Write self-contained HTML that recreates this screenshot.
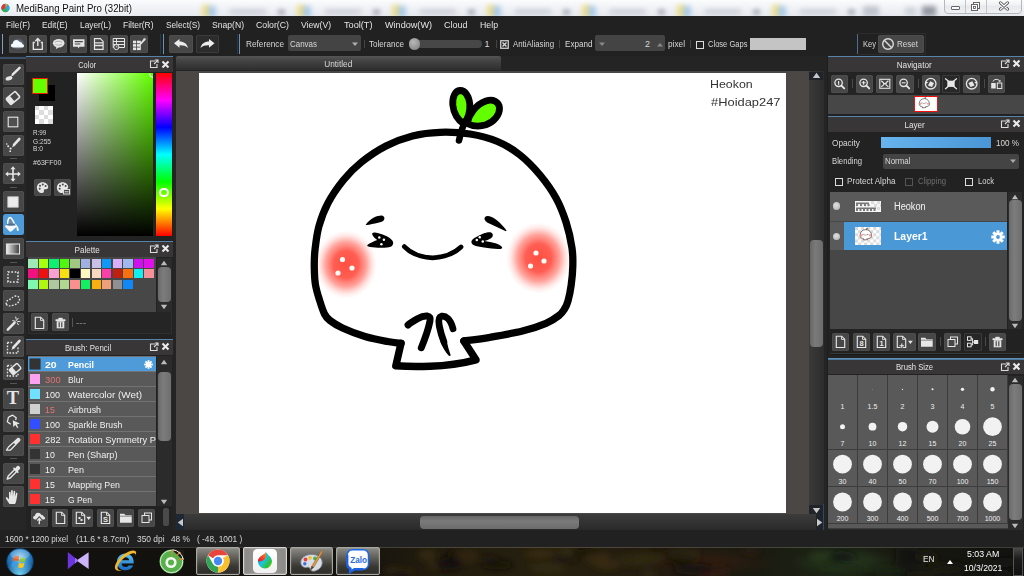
<!DOCTYPE html>
<html><head><meta charset="utf-8"><title>MediBang Paint Pro</title>
<style>
html,body{margin:0;padding:0;background:#1e1e1e;}
#root{position:relative;width:1024px;height:576px;overflow:hidden;background:#1e1e1e;font-family:"Liberation Sans",sans-serif;}
.a{position:absolute;box-sizing:border-box;}
.t{white-space:nowrap;}
.btn{background:#474747;border-radius:2.5px;box-shadow:inset 0 0 0 0.6px #545454;}
</style></head><body><div id="root">
<div class="a " style="left:0px;top:0px;width:1024px;height:16px;background:linear-gradient(#fbfcfd,#eef0f4 60%,#e6e9ee);"></div>
<div class="a " style="left:202px;top:5px;width:8px;height:12px;background:#ecd458;filter:blur(2.4px);opacity:.65;"></div>
<div class="a " style="left:208px;top:6px;width:8px;height:11px;background:#7fb4e8;filter:blur(2.4px);opacity:.6;"></div>
<div class="a " style="left:230px;top:9px;width:36px;height:5px;background:#8a92a2;filter:blur(2.4px);opacity:.32;"></div>
<div class="a " style="left:278px;top:8.5px;width:7px;height:6.0px;background:#5a6272;filter:blur(2px);opacity:.4;"></div>
<div class="a " style="left:297px;top:5px;width:8px;height:12px;background:#ecd458;filter:blur(2.4px);opacity:.65;"></div>
<div class="a " style="left:303px;top:6px;width:8px;height:11px;background:#7fb4e8;filter:blur(2.4px);opacity:.6;"></div>
<div class="a " style="left:325px;top:9px;width:36px;height:5px;background:#8a92a2;filter:blur(2.4px);opacity:.32;"></div>
<div class="a " style="left:373px;top:8.5px;width:7px;height:6.0px;background:#5a6272;filter:blur(2px);opacity:.4;"></div>
<div class="a " style="left:392px;top:5px;width:8px;height:12px;background:#ecd458;filter:blur(2.4px);opacity:.65;"></div>
<div class="a " style="left:398px;top:6px;width:8px;height:11px;background:#7fb4e8;filter:blur(2.4px);opacity:.6;"></div>
<div class="a " style="left:420px;top:9px;width:36px;height:5px;background:#8a92a2;filter:blur(2.4px);opacity:.32;"></div>
<div class="a " style="left:468px;top:8.5px;width:7px;height:6.0px;background:#5a6272;filter:blur(2px);opacity:.4;"></div>
<div class="a " style="left:487px;top:5px;width:8px;height:12px;background:#ecd458;filter:blur(2.4px);opacity:.65;"></div>
<div class="a " style="left:493px;top:6px;width:8px;height:11px;background:#7fb4e8;filter:blur(2.4px);opacity:.6;"></div>
<div class="a " style="left:515px;top:9px;width:36px;height:5px;background:#8a92a2;filter:blur(2.4px);opacity:.32;"></div>
<div class="a " style="left:563px;top:8.5px;width:7px;height:6.0px;background:#5a6272;filter:blur(2px);opacity:.4;"></div>
<div class="a " style="left:582px;top:5px;width:8px;height:12px;background:#ecd458;filter:blur(2.4px);opacity:.65;"></div>
<div class="a " style="left:588px;top:6px;width:8px;height:11px;background:#7fb4e8;filter:blur(2.4px);opacity:.6;"></div>
<div class="a " style="left:610px;top:9px;width:36px;height:5px;background:#8a92a2;filter:blur(2.4px);opacity:.32;"></div>
<div class="a " style="left:658px;top:8.5px;width:7px;height:6.0px;background:#5a6272;filter:blur(2px);opacity:.4;"></div>
<div class="a " style="left:677px;top:5px;width:8px;height:12px;background:#ecd458;filter:blur(2.4px);opacity:.65;"></div>
<div class="a " style="left:683px;top:6px;width:8px;height:11px;background:#7fb4e8;filter:blur(2.4px);opacity:.6;"></div>
<div class="a " style="left:705px;top:9px;width:36px;height:5px;background:#8a92a2;filter:blur(2.4px);opacity:.32;"></div>
<div class="a " style="left:753px;top:8.5px;width:7px;height:6.0px;background:#5a6272;filter:blur(2px);opacity:.4;"></div>
<div class="a " style="left:772px;top:5px;width:8px;height:12px;background:#ecd458;filter:blur(2.4px);opacity:.65;"></div>
<div class="a " style="left:778px;top:6px;width:8px;height:11px;background:#7fb4e8;filter:blur(2.4px);opacity:.6;"></div>
<div class="a " style="left:800px;top:9px;width:36px;height:5px;background:#8a92a2;filter:blur(2.4px);opacity:.32;"></div>
<div class="a " style="left:848px;top:8.5px;width:7px;height:6.0px;background:#5a6272;filter:blur(2px);opacity:.4;"></div>
<div class="a " style="left:863px;top:6px;width:16px;height:10px;background:#8a92a0;filter:blur(2.5px);opacity:.45;"></div>
<div class="a " style="left:905px;top:7px;width:11px;height:8px;background:#a0a8b4;filter:blur(2.5px);opacity:.4;"></div>
<div class="a " style="left:922px;top:6px;width:14px;height:10px;background:#4a5260;filter:blur(2.5px);opacity:.55;"></div>
<svg class="a" style="left:0px;top:2px;" width="12" height="12" viewBox="0 0 12 12"><circle cx="5.5" cy="6" r="5" fill="#fff"/><circle cx="5.5" cy="6" r="4.3" fill="#30a8d8"/><path d="M5.5 1.7a4.3 4.3 0 0 0-3.6 6.6L5.5 6z" fill="#e03838"/><path d="M1.9 8.3a4.3 4.3 0 0 0 6 1.2L5.5 6z" fill="#38b048"/><path d="M5.5 1.7a4.3 4.3 0 0 1 2 .5L5.5 6z" fill="#f0a020"/></svg>
<div class="a t" style="left:16px;top:0.5px;font-size:10.5px;line-height:15px;color:#111;transform:scaleX(0.9201);transform-origin:0 50%;text-shadow:0 0 3px #fff,0 0 5px #fff;">MediBang Paint Pro (32bit)</div>
<div class="a " style="left:944.2px;top:-2px;width:77.5px;height:15.5px;border:1px solid #b4b8be;border-radius:0 0 4px 4px;background:linear-gradient(#fdfdfd,#f0f1f3 45%,#e6e8eb 50%,#f0f1f3);"></div>
<div class="a " style="left:965px;top:0px;width:1px;height:13px;background:#c0c4ca;"></div>
<div class="a " style="left:986px;top:0px;width:1px;height:13px;background:#c0c4ca;"></div>
<div class="a " style="left:951px;top:5.6px;width:9px;height:4.2px;border:1px solid #666;background:#fff;border-radius:1px;"></div>
<svg class="a" style="left:970px;top:1px;" width="12" height="11" viewBox="0 0 12 11"><rect x="3.5" y="1.5" width="6" height="6" fill="#fff" stroke="#666"/><rect x="1.5" y="3.5" width="6" height="6" fill="#fff" stroke="#666"/><rect x="3.5" y="5.5" width="2" height="2" fill="none" stroke="#555" stroke-width=".8"/></svg>
<svg class="a" style="left:998px;top:1.2px;" width="12" height="10" viewBox="0 0 12 10"><path d="M2.500 1.800L9.500 8.200M9.500 1.800L2.500 8.200" stroke="#555" stroke-width="3" stroke-linecap="round"/><path d="M2.500 1.800L9.500 8.200M9.500 1.800L2.500 8.200" stroke="#fff" stroke-width="1.300" stroke-linecap="round"/></svg>
<div class="a " style="left:0px;top:16px;width:1024px;height:17px;background:#212121;"></div>
<div class="a t" style="left:6px;top:18.0px;font-size:9.5px;line-height:13px;color:#e4e4e4;transform:scaleX(0.8747);transform-origin:0 50%;">File(F)</div>
<div class="a t" style="left:42px;top:18.0px;font-size:9.5px;line-height:13px;color:#e4e4e4;transform:scaleX(0.8783);transform-origin:0 50%;">Edit(E)</div>
<div class="a t" style="left:79.5px;top:18.0px;font-size:9.5px;line-height:13px;color:#e4e4e4;transform:scaleX(0.8763);transform-origin:0 50%;">Layer(L)</div>
<div class="a t" style="left:123px;top:18.0px;font-size:9.5px;line-height:13px;color:#e4e4e4;transform:scaleX(0.8893);transform-origin:0 50%;">Filter(R)</div>
<div class="a t" style="left:165.5px;top:18.0px;font-size:9.5px;line-height:13px;color:#e4e4e4;transform:scaleX(0.8703);transform-origin:0 50%;">Select(S)</div>
<div class="a t" style="left:211.5px;top:18.0px;font-size:9.5px;line-height:13px;color:#e4e4e4;transform:scaleX(0.9046);transform-origin:0 50%;">Snap(N)</div>
<div class="a t" style="left:256px;top:18.0px;font-size:9.5px;line-height:13px;color:#e4e4e4;transform:scaleX(0.9195);transform-origin:0 50%;">Color(C)</div>
<div class="a t" style="left:301px;top:18.0px;font-size:9.5px;line-height:13px;color:#e4e4e4;transform:scaleX(0.9068);transform-origin:0 50%;">View(V)</div>
<div class="a t" style="left:344px;top:18.0px;font-size:9.5px;line-height:13px;color:#e4e4e4;transform:scaleX(0.9642);transform-origin:0 50%;">Tool(T)</div>
<div class="a t" style="left:384.5px;top:18.0px;font-size:9.5px;line-height:13px;color:#e4e4e4;transform:scaleX(0.9576);transform-origin:0 50%;">Window(W)</div>
<div class="a t" style="left:444px;top:18.0px;font-size:9.5px;line-height:13px;color:#e4e4e4;transform:scaleX(0.9467);transform-origin:0 50%;">Cloud</div>
<div class="a t" style="left:480px;top:18.0px;font-size:9.5px;line-height:13px;color:#e4e4e4;transform:scaleX(0.9212);transform-origin:0 50%;">Help</div>
<div class="a " style="left:0px;top:33px;width:1024px;height:23px;background:#212121;"></div>
<div class="a " style="left:1.8px;top:34px;width:1.2px;height:20px;background:#7fa2c4;"></div>
<div class="a btn" style="left:9px;top:35px;width:17.5px;height:18px;"></div>
<div class="a btn" style="left:29px;top:35px;width:17.5px;height:18px;"></div>
<div class="a btn" style="left:49.5px;top:35px;width:17.5px;height:18px;"></div>
<div class="a btn" style="left:69.5px;top:35px;width:17.5px;height:18px;"></div>
<div class="a btn" style="left:90px;top:35px;width:17.5px;height:18px;"></div>
<div class="a btn" style="left:110px;top:35px;width:17.5px;height:18px;"></div>
<div class="a btn" style="left:130px;top:35px;width:17.5px;height:18px;"></div>
<div class="a " style="left:163px;top:33.5px;width:1.2px;height:20.5px;background:#6a90b4;"></div>
<div class="a " style="left:160px;top:33.5px;width:1px;height:20.5px;background:#24384c;"></div>
<div class="a btn" style="left:169px;top:35px;width:24px;height:18px;"></div>
<div class="a " style="left:196px;top:35px;width:23px;height:18px;background:#2c2c2c;border-radius:2.5px;box-shadow:inset 0 0 0 0.5px #484848;"></div>
<div class="a " style="left:239.2px;top:33.5px;width:1.2px;height:20.5px;background:#6a90b4;"></div>
<div class="a " style="left:236.5px;top:33.5px;width:1.0px;height:20.5px;background:#24384c;"></div>
<div class="a t" style="left:246px;top:38.0px;font-size:9px;line-height:13px;color:#d8d8d8;transform:scaleX(0.9151);transform-origin:0 50%;">Reference</div>
<div class="a " style="left:288.2px;top:35.2px;width:72.8px;height:16.2px;background:#444;border-radius:2px;"></div>
<div class="a t" style="left:290px;top:38.0px;font-size:9px;line-height:13px;color:#d8d8d8;transform:scaleX(0.8848);transform-origin:0 50%;">Canvas</div>
<svg class="a" style="left:351px;top:41.5px;" width="8" height="5" viewBox="0 0 8 5"><path d="M1 .5h6L4 4z" fill="#b0b0b0"/></svg>
<div class="a " style="left:363.5px;top:40px;width:1.0px;height:8px;background:#444;"></div>
<div class="a t" style="left:369px;top:38.0px;font-size:9px;line-height:13px;color:#d8d8d8;transform:scaleX(0.8969);transform-origin:0 50%;">Tolerance</div>
<div class="a " style="left:412px;top:40px;width:69.7px;height:7.5px;background:#474747;border-radius:3.7px;"></div>
<div class="a " style="left:408.8px;top:38.2px;width:11.4px;height:11.4px;background:radial-gradient(circle at 40% 35%,#b8b8b8,#7c7c7c);border-radius:50%;"></div>
<div class="a t" style="left:484.5px;top:38.0px;font-size:9px;line-height:13px;color:#d8d8d8;">1</div>
<div class="a " style="left:495.5px;top:40px;width:1.0px;height:8px;background:#444;"></div>
<svg class="a" style="left:500px;top:40px;" width="9" height="9" viewBox="0 0 9 9"><rect x=".75" y=".75" width="7.5" height="7.5" fill="none" stroke="#ddd" stroke-width="1.2"/><path d="M2.5 2.5l4 4M6.5 2.5l-4 4" stroke="#ddd" stroke-width="1.3"/></svg>
<div class="a t" style="left:513px;top:38.0px;font-size:9px;line-height:13px;color:#d8d8d8;transform:scaleX(0.8719);transform-origin:0 50%;">AntiAliasing</div>
<div class="a " style="left:559px;top:40px;width:1px;height:8px;background:#444;"></div>
<div class="a t" style="left:564.5px;top:38.0px;font-size:9px;line-height:13px;color:#d8d8d8;transform:scaleX(0.9009);transform-origin:0 50%;">Expand</div>
<div class="a " style="left:595.1px;top:35.2px;width:69.8px;height:16.2px;background:#444;border-radius:2px;"></div>
<svg class="a" style="left:598px;top:42px;" width="8" height="5" viewBox="0 0 8 5"><path d="M1 .5h6L4 4z" fill="#8a8a8a"/></svg>
<div class="a t" style="left:645px;top:38.0px;font-size:9px;line-height:13px;color:#d8d8d8;">2</div>
<svg class="a" style="left:655.5px;top:41.5px;" width="8" height="5" viewBox="0 0 8 5"><path d="M1 4.5h6L4 1z" fill="#8a8a8a"/></svg>
<div class="a t" style="left:667.5px;top:38.0px;font-size:9px;line-height:13px;color:#d8d8d8;transform:scaleX(0.9185);transform-origin:0 50%;">pixel</div>
<div class="a " style="left:689.5px;top:40px;width:1.0px;height:8px;background:#444;"></div>
<div class="a " style="left:695.5px;top:40.5px;width:8.0px;height:8.0px;border:1px solid #ddd;"></div>
<div class="a t" style="left:707.5px;top:38.0px;font-size:9px;line-height:13px;color:#d8d8d8;transform:scaleX(0.8400);transform-origin:0 50%;">Close Gaps</div>
<div class="a " style="left:749.5px;top:37.5px;width:56.5px;height:12.0px;background:#c4c4c4;"></div>
<div class="a " style="left:856.5px;top:34px;width:1.2px;height:20px;background:#4a7094;"></div>
<div class="a " style="left:858px;top:33px;width:68px;height:22px;border:1px solid #2c2c2c;border-left:none;"></div>
<div class="a t" style="left:862.5px;top:38.0px;font-size:9px;line-height:13px;color:#d8d8d8;transform:scaleX(0.8382);transform-origin:0 50%;">Key</div>
<div class="a btn" style="left:878px;top:35px;width:45.5px;height:18px;"></div>
<svg class="a" style="left:881px;top:37px;" width="14" height="14" viewBox="0 0 14 14"><circle cx="7" cy="7" r="5.3" fill="none" stroke="#ddd" stroke-width="1.4"/><path d="M3.3 3.3l7.4 7.4" stroke="#ddd" stroke-width="1.4"/></svg>
<div class="a t" style="left:896.5px;top:38.0px;font-size:9px;line-height:13px;color:#d8d8d8;transform:scaleX(0.8932);transform-origin:0 50%;">Reset</div>
<div class="a " style="left:0px;top:56px;width:26px;height:474px;background:#262626;"></div>
<div class="a " style="left:0px;top:57.3px;width:26px;height:1.3px;background:#3a5068;"></div>
<div class="a btn" style="left:3px;top:63.5px;width:20.5px;height:21.0px;"></div>
<div class="a btn" style="left:3px;top:87px;width:20.5px;height:21px;"></div>
<div class="a btn" style="left:3px;top:111px;width:20.5px;height:21px;"></div>
<div class="a btn" style="left:3px;top:134.5px;width:20.5px;height:21.0px;"></div>
<div class="a btn" style="left:3px;top:163px;width:20.5px;height:21px;"></div>
<div class="a btn" style="left:3px;top:191px;width:20.5px;height:21px;"></div>
<div class="a " style="left:3px;top:214px;width:20.5px;height:21px;background:#4f9ad8;border-radius:2.5px;"></div>
<div class="a btn" style="left:3px;top:238px;width:20.5px;height:21px;"></div>
<div class="a btn" style="left:3px;top:266px;width:20.5px;height:21px;"></div>
<div class="a btn" style="left:3px;top:290px;width:20.5px;height:21px;"></div>
<div class="a btn" style="left:3px;top:313px;width:20.5px;height:21px;"></div>
<div class="a btn" style="left:3px;top:336px;width:20.5px;height:21px;"></div>
<div class="a btn" style="left:3px;top:359px;width:20.5px;height:21px;"></div>
<div class="a btn" style="left:3px;top:387.5px;width:20.5px;height:21.0px;"></div>
<div class="a btn" style="left:3px;top:411px;width:20.5px;height:21px;"></div>
<div class="a btn" style="left:3px;top:434.5px;width:20.5px;height:21.0px;"></div>
<div class="a btn" style="left:3px;top:462.5px;width:20.5px;height:21.0px;"></div>
<div class="a btn" style="left:3px;top:486px;width:20.5px;height:21px;"></div>
<div class="a " style="left:10px;top:158px;width:7px;height:1px;background:#555;"></div>
<div class="a " style="left:10px;top:187px;width:7px;height:1px;background:#555;"></div>
<div class="a " style="left:10px;top:262px;width:7px;height:1px;background:#555;"></div>
<div class="a " style="left:10px;top:383px;width:7px;height:1px;background:#555;"></div>
<div class="a " style="left:10px;top:458px;width:7px;height:1px;background:#555;"></div>
<div class="a " style="left:0px;top:530px;width:1024px;height:17px;background:#212121;"></div>
<div class="a t" style="left:4.6px;top:532.9px;font-size:9px;line-height:13px;color:#d8d8d8;transform:scaleX(0.9072);transform-origin:0 50%;">1600 * 1200 pixel</div>
<div class="a t" style="left:75.9px;top:532.9px;font-size:9px;line-height:13px;color:#d8d8d8;transform:scaleX(0.9542);transform-origin:0 50%;">(11.6 * 8.7cm)</div>
<div class="a t" style="left:136.7px;top:532.9px;font-size:9px;line-height:13px;color:#d8d8d8;transform:scaleX(0.9347);transform-origin:0 50%;">350 dpi</div>
<div class="a t" style="left:171.4px;top:532.9px;font-size:9px;line-height:13px;color:#d8d8d8;transform:scaleX(0.9213);transform-origin:0 50%;">48 %</div>
<div class="a t" style="left:197.3px;top:532.9px;font-size:9px;line-height:13px;color:#d8d8d8;transform:scaleX(0.9219);transform-origin:0 50%;">( -48, 1001 )</div>
<div class="a " style="left:26px;top:56px;width:147px;height:474px;background:#222222;"></div>
<div class="a " style="left:26px;top:57.3px;width:147px;height:14.9px;background:#383636;"></div>
<div class="a " style="left:26px;top:55.9px;width:147px;height:1.5px;background:linear-gradient(#6b98be,#3f6f98);"></div>
<div class="a t" style="left:76.44414062499999px;width:22.31171875px;text-align:center;top:59.099999999999994px;font-size:8.5px;line-height:12px;color:#e4e4e4;transform:scaleX(0.8763);">Color</div>
<svg class="a" style="left:148.7px;top:59.3px;" width="10" height="10" viewBox="0 0 10 10"><path d="M6 2H1.5v6.5H8V5" fill="none" stroke="#ddd" stroke-width="1.1"/><path d="M5 5l3.5-3.5M6 1h3v3" fill="none" stroke="#ddd" stroke-width="1.1"/></svg>
<svg class="a" style="left:161.3px;top:59.5px;" width="9" height="9" viewBox="0 0 9 9"><path d="M1.500 1.500l6 6M7.500 1.500l-6 6" stroke="#ececec" stroke-width="2.100"/></svg>
<div class="a " style="left:39px;top:85px;width:15.5px;height:15.5px;background:#000;"></div>
<div class="a " style="left:32px;top:78px;width:16px;height:16px;background:#63ff00;border:1.8px solid #f01800;"></div>
<div class="a " style="left:34.5px;top:106px;width:18.0px;height:17.5px;background:#fff;"></div>
<div class="a " style="left:34.5px;top:106px;width:4.5px;height:4.4px;background:#ddd;"></div>
<div class="a " style="left:43.5px;top:106px;width:4.5px;height:4.4px;background:#ddd;"></div>
<div class="a " style="left:39px;top:110.4px;width:4.5px;height:4.4px;background:#ddd;"></div>
<div class="a " style="left:48px;top:110.4px;width:4.5px;height:4.4px;background:#ddd;"></div>
<div class="a " style="left:34.5px;top:114.8px;width:4.5px;height:4.4px;background:#ddd;"></div>
<div class="a " style="left:43.5px;top:114.8px;width:4.5px;height:4.4px;background:#ddd;"></div>
<div class="a " style="left:39px;top:119.2px;width:4.5px;height:4.4px;background:#ddd;"></div>
<div class="a " style="left:48px;top:119.2px;width:4.5px;height:4.4px;background:#ddd;"></div>
<div class="a t" style="left:32.8px;top:128.3px;font-size:7.2px;line-height:10px;color:#d8d8d8;transform:scaleX(0.8810);transform-origin:0 50%;">R:99</div>
<div class="a t" style="left:32.8px;top:136.6px;font-size:7.2px;line-height:10px;color:#d8d8d8;transform:scaleX(0.9176);transform-origin:0 50%;">G:255</div>
<div class="a t" style="left:32.8px;top:144.4px;font-size:7.2px;line-height:10px;color:#d8d8d8;transform:scaleX(0.9160);transform-origin:0 50%;">B:0</div>
<div class="a t" style="left:33px;top:158.2px;font-size:7.2px;line-height:10px;color:#d8d8d8;transform:scaleX(0.9854);transform-origin:0 50%;">#63FF00</div>
<div class="a btn" style="left:34px;top:178.5px;width:17px;height:17.5px;"></div>
<div class="a btn" style="left:54px;top:178.5px;width:17px;height:17.5px;"></div>
<div class="a " style="left:77px;top:73px;width:76px;height:163px;background:linear-gradient(to bottom,rgba(0,0,0,0),#000),linear-gradient(to right,#fff,#63ff00);"></div>
<div class="a " style="left:156px;top:73px;width:15.5px;height:163px;background:linear-gradient(to bottom,#f00,#f0f 16.7%,#00f 33.3%,#0ff 50%,#0f0 66.7%,#ff0 83.3%,#f00);"></div>
<div class="a" style="left:77px;top:73px;width:76px;height:163px;overflow:hidden;"><div class="a" style="left:71.5px;top:-4px;width:9px;height:9px;border:1.5px solid #fff;border-radius:50%;"></div></div>
<div class="a " style="left:159px;top:187.5px;width:9.5px;height:9.5px;border:2px solid #fff;border-radius:50%;"></div>
<div class="a " style="left:26px;top:242.0px;width:147px;height:14.9px;background:#383636;"></div>
<div class="a " style="left:26px;top:240.6px;width:147px;height:1.5px;background:linear-gradient(#6b98be,#3f6f98);"></div>
<div class="a t" style="left:73.468359375px;width:28.46328125px;text-align:center;top:243.79999999999998px;font-size:8.5px;line-height:12px;color:#e4e4e4;transform:scaleX(0.9560);">Palette</div>
<svg class="a" style="left:148.7px;top:244.0px;" width="10" height="10" viewBox="0 0 10 10"><path d="M6 2H1.5v6.5H8V5" fill="none" stroke="#ddd" stroke-width="1.1"/><path d="M5 5l3.5-3.5M6 1h3v3" fill="none" stroke="#ddd" stroke-width="1.1"/></svg>
<svg class="a" style="left:161.3px;top:244.2px;" width="9" height="9" viewBox="0 0 9 9"><path d="M1.500 1.500l6 6M7.500 1.500l-6 6" stroke="#ececec" stroke-width="2.100"/></svg>
<div class="a " style="left:28px;top:257px;width:128px;height:54.5px;background:#474747;"></div>
<div class="a " style="left:28.2px;top:258.5px;width:9.4px;height:9.4px;background:#a0e8b8;"></div>
<div class="a " style="left:38.75px;top:258.5px;width:9.4px;height:9.4px;background:#a8ff10;"></div>
<div class="a " style="left:49.3px;top:258.5px;width:9.4px;height:9.4px;background:#10f070;"></div>
<div class="a " style="left:59.85px;top:258.5px;width:9.4px;height:9.4px;background:#50f810;"></div>
<div class="a " style="left:70.4px;top:258.5px;width:9.4px;height:9.4px;background:#a0c880;"></div>
<div class="a " style="left:80.95px;top:258.5px;width:9.4px;height:9.4px;background:#a0b0e0;"></div>
<div class="a " style="left:91.5px;top:258.5px;width:9.4px;height:9.4px;background:#c8c0e8;"></div>
<div class="a " style="left:102.05px;top:258.5px;width:9.4px;height:9.4px;background:#1098f8;"></div>
<div class="a " style="left:112.6px;top:258.5px;width:9.4px;height:9.4px;background:#d8b0f8;"></div>
<div class="a " style="left:123.15px;top:258.5px;width:9.4px;height:9.4px;background:#a0b8f0;"></div>
<div class="a " style="left:133.7px;top:258.5px;width:9.4px;height:9.4px;background:#d010f0;"></div>
<div class="a " style="left:144.25px;top:258.5px;width:9.4px;height:9.4px;background:#e010e8;"></div>
<div class="a " style="left:28.2px;top:269.05px;width:9.4px;height:9.4px;background:#f01080;"></div>
<div class="a " style="left:38.75px;top:269.05px;width:9.4px;height:9.4px;background:#f01010;"></div>
<div class="a " style="left:49.3px;top:269.05px;width:9.4px;height:9.4px;background:#f8a0d0;"></div>
<div class="a " style="left:59.85px;top:269.05px;width:9.4px;height:9.4px;background:#f8e010;"></div>
<div class="a " style="left:70.4px;top:269.05px;width:9.4px;height:9.4px;background:#000000;"></div>
<div class="a " style="left:80.95px;top:269.05px;width:9.4px;height:9.4px;background:#fff8c0;"></div>
<div class="a " style="left:91.5px;top:269.05px;width:9.4px;height:9.4px;background:#f8d8c0;"></div>
<div class="a " style="left:102.05px;top:269.05px;width:9.4px;height:9.4px;background:#f840a8;"></div>
<div class="a " style="left:112.6px;top:269.05px;width:9.4px;height:9.4px;background:#c02010;"></div>
<div class="a " style="left:123.15px;top:269.05px;width:9.4px;height:9.4px;background:#f87010;"></div>
<div class="a " style="left:133.7px;top:269.05px;width:9.4px;height:9.4px;background:#10f0f0;"></div>
<div class="a " style="left:144.25px;top:269.05px;width:9.4px;height:9.4px;background:#f89098;"></div>
<div class="a " style="left:28.2px;top:279.6px;width:9.4px;height:9.4px;background:#80f8b0;"></div>
<div class="a " style="left:38.75px;top:279.6px;width:9.4px;height:9.4px;background:#b0f810;"></div>
<div class="a " style="left:49.3px;top:279.6px;width:9.4px;height:9.4px;background:#b0c8a0;"></div>
<div class="a " style="left:59.85px;top:279.6px;width:9.4px;height:9.4px;background:#b0d890;"></div>
<div class="a " style="left:70.4px;top:279.6px;width:9.4px;height:9.4px;background:#f89090;"></div>
<div class="a " style="left:80.95px;top:279.6px;width:9.4px;height:9.4px;background:#10f060;"></div>
<div class="a " style="left:91.5px;top:279.6px;width:9.4px;height:9.4px;background:#f8b010;"></div>
<div class="a " style="left:102.05px;top:279.6px;width:9.4px;height:9.4px;background:#f0a078;"></div>
<div class="a " style="left:112.6px;top:279.6px;width:9.4px;height:9.4px;background:#909090;"></div>
<div class="a " style="left:123.15px;top:279.6px;width:9.4px;height:9.4px;background:#1088f8;"></div>
<div class="a " style="left:157px;top:258px;width:14.5px;height:53.5px;background:#2b2b2b;"></div>
<svg class="a" style="left:160px;top:259.5px;" width="8" height="6" viewBox="0 0 8 6"><path d="M4 .8L7.2 5.2H.8z" fill="#bbb"/></svg>
<svg class="a" style="left:160px;top:303.5px;" width="8" height="6" viewBox="0 0 8 6"><path d="M4 5.2L7.2 .8H.8z" fill="#bbb"/></svg>
<div class="a " style="left:157.5px;top:267px;width:13.0px;height:34.5px;background:linear-gradient(to right,#6a6a6a,#7c7c7c 40%,#6e6e6e);border-radius:4px;"></div>
<div class="a " style="left:28px;top:311.5px;width:143.5px;height:22.5px;border:1px solid #2e2e2e;border-top:none;background:#252525;"></div>
<div class="a btn" style="left:31px;top:313px;width:17px;height:18px;"></div>
<div class="a btn" style="left:51.5px;top:313px;width:17.0px;height:18px;"></div>
<div class="a " style="left:72px;top:318px;width:1px;height:9px;background:#555;"></div>
<div class="a t" style="left:76px;top:316.5px;font-size:8px;line-height:11px;color:#aaa;transform:scaleX(1.2512);transform-origin:0 50%;">---</div>
<div class="a " style="left:26px;top:340.0px;width:147px;height:14.9px;background:#383636;"></div>
<div class="a " style="left:26px;top:338.6px;width:147px;height:1.5px;background:linear-gradient(#6b98be,#3f6f98);"></div>
<div class="a t" style="left:61.860546875000004px;width:52.07890625px;text-align:center;top:341.8px;font-size:8.5px;line-height:12px;color:#e4e4e4;transform:scaleX(0.9245);">Brush: Pencil</div>
<svg class="a" style="left:148.7px;top:342.0px;" width="10" height="10" viewBox="0 0 10 10"><path d="M6 2H1.5v6.5H8V5" fill="none" stroke="#ddd" stroke-width="1.1"/><path d="M5 5l3.5-3.5M6 1h3v3" fill="none" stroke="#ddd" stroke-width="1.1"/></svg>
<svg class="a" style="left:161.3px;top:342.20000000000005px;" width="9" height="9" viewBox="0 0 9 9"><path d="M1.500 1.500l6 6M7.500 1.500l-6 6" stroke="#ececec" stroke-width="2.100"/></svg>
<div class="a " style="left:28px;top:356px;width:128px;height:150px;background:#727272;"></div>
<div class="a" style="left:28px;top:357px;width:128px;height:14px;background:#4f9ad8;overflow:hidden;">
</div>
<div class="a " style="left:30px;top:359.3px;width:10px;height:9.7px;background:#333333;box-shadow:0 0 0 .5px #222;"></div>
<div class="a t" style="left:44.5px;top:357.8px;font-size:9.5px;line-height:13px;color:#fff;font-weight:bold;transform:scaleX(1.1072);transform-origin:0 50%;">20</div>
<div class="a t" style="left:68px;top:357.8px;font-size:9.5px;line-height:13px;color:#fff;font-weight:bold;transform:scaleX(0.9291);transform-origin:0 50%;">Pencil</div>
<div class="a" style="left:28px;top:372px;width:128px;height:14px;background:#595959;overflow:hidden;">
</div>
<div class="a " style="left:30px;top:374.3px;width:10px;height:9.7px;background:#ffa0f0;"></div>
<div class="a t" style="left:44.5px;top:372.8px;font-size:9.5px;line-height:13px;color:#e47474;transform:scaleX(0.9842);transform-origin:0 50%;">300</div>
<div class="a t" style="left:68px;top:372.8px;font-size:9.5px;line-height:13px;color:#f0f0f0;transform:scaleX(0.9056);transform-origin:0 50%;">Blur</div>
<div class="a" style="left:28px;top:387px;width:128px;height:14px;background:#595959;overflow:hidden;">
</div>
<div class="a " style="left:30px;top:389.3px;width:10px;height:9.7px;background:#70e0ff;"></div>
<div class="a t" style="left:44.5px;top:387.8px;font-size:9.5px;line-height:13px;color:#f0f0f0;transform:scaleX(0.9463);transform-origin:0 50%;">100</div>
<div class="a t" style="left:68px;top:387.8px;font-size:9.5px;line-height:13px;color:#f0f0f0;transform:scaleX(1.0385);transform-origin:0 50%;">Watercolor (Wet)</div>
<div class="a" style="left:28px;top:402px;width:128px;height:14px;background:#595959;overflow:hidden;">
</div>
<div class="a " style="left:30px;top:404.3px;width:10px;height:9.7px;background:#d0d0d0;"></div>
<div class="a t" style="left:44.5px;top:402.8px;font-size:9.5px;line-height:13px;color:#e47474;transform:scaleX(0.9274);transform-origin:0 50%;">15</div>
<div class="a t" style="left:68px;top:402.8px;font-size:9.5px;line-height:13px;color:#f0f0f0;transform:scaleX(0.9329);transform-origin:0 50%;">Airbrush</div>
<div class="a" style="left:28px;top:417px;width:128px;height:14px;background:#595959;overflow:hidden;">
</div>
<div class="a " style="left:30px;top:419.3px;width:10px;height:9.7px;background:#3050ff;"></div>
<div class="a t" style="left:44.5px;top:417.8px;font-size:9.5px;line-height:13px;color:#f0f0f0;transform:scaleX(0.9463);transform-origin:0 50%;">100</div>
<div class="a t" style="left:68px;top:417.8px;font-size:9.5px;line-height:13px;color:#f0f0f0;transform:scaleX(0.9100);transform-origin:0 50%;">Sparkle Brush</div>
<div class="a" style="left:28px;top:432px;width:128px;height:14px;background:#595959;overflow:hidden;">
</div>
<div class="a " style="left:30px;top:434.3px;width:10px;height:9.7px;background:#ff3030;"></div>
<div class="a t" style="left:44.5px;top:432.8px;font-size:9.5px;line-height:13px;color:#f0f0f0;transform:scaleX(0.9842);transform-origin:0 50%;">282</div>
<div class="a" style="left:28px;top:432px;width:128px;height:14px;overflow:hidden;">

<div class="a t" style="left:40px;top:0.7999999999999998px;font-size:9.5px;line-height:13px;color:#f0f0f0;transform:scaleX(0.9805);transform-origin:0 50%;">Rotation Symmetry P</div>
</div>
<div class="a" style="left:28px;top:447px;width:128px;height:14px;background:#595959;overflow:hidden;">
</div>
<div class="a " style="left:30px;top:449.3px;width:10px;height:9.7px;background:#333333;"></div>
<div class="a t" style="left:44.5px;top:447.8px;font-size:9.5px;line-height:13px;color:#f0f0f0;transform:scaleX(0.9274);transform-origin:0 50%;">10</div>
<div class="a t" style="left:68px;top:447.8px;font-size:9.5px;line-height:13px;color:#f0f0f0;transform:scaleX(0.9664);transform-origin:0 50%;">Pen (Sharp)</div>
<div class="a" style="left:28px;top:462px;width:128px;height:14px;background:#595959;overflow:hidden;">
</div>
<div class="a " style="left:30px;top:464.3px;width:10px;height:9.7px;background:#333333;"></div>
<div class="a t" style="left:44.5px;top:462.8px;font-size:9.5px;line-height:13px;color:#f0f0f0;transform:scaleX(0.9274);transform-origin:0 50%;">10</div>
<div class="a t" style="left:68px;top:462.8px;font-size:9.5px;line-height:13px;color:#f0f0f0;transform:scaleX(0.9465);transform-origin:0 50%;">Pen</div>
<div class="a" style="left:28px;top:477px;width:128px;height:14px;background:#595959;overflow:hidden;">
</div>
<div class="a " style="left:30px;top:479.3px;width:10px;height:9.7px;background:#ff3030;"></div>
<div class="a t" style="left:44.5px;top:477.8px;font-size:9.5px;line-height:13px;color:#f0f0f0;transform:scaleX(0.9274);transform-origin:0 50%;">15</div>
<div class="a t" style="left:68px;top:477.8px;font-size:9.5px;line-height:13px;color:#f0f0f0;transform:scaleX(0.9288);transform-origin:0 50%;">Mapping Pen</div>
<div class="a" style="left:28px;top:492px;width:128px;height:13.5px;background:#595959;overflow:hidden;">
</div>
<div class="a " style="left:30px;top:494.3px;width:10px;height:9.7px;background:#ff3030;"></div>
<div class="a t" style="left:44.5px;top:492.8px;font-size:9.5px;line-height:13px;color:#f0f0f0;transform:scaleX(0.9274);transform-origin:0 50%;">15</div>
<div class="a t" style="left:68px;top:492.8px;font-size:9.5px;line-height:13px;color:#f0f0f0;transform:scaleX(0.8911);transform-origin:0 50%;">G Pen</div>
<svg class="a" style="left:143.8px;top:359.8px;" width="9" height="9" viewBox="0 0 9 9"><g transform="translate(4.5 4.5)" fill="#fff"><circle r="2.700"/><rect x="-.9" y="-4.300" width="1.800" height="2.400" transform="rotate(0)"/><rect x="-.9" y="-4.300" width="1.800" height="2.400" transform="rotate(45)"/><rect x="-.9" y="-4.300" width="1.800" height="2.400" transform="rotate(90)"/><rect x="-.9" y="-4.300" width="1.800" height="2.400" transform="rotate(135)"/><rect x="-.9" y="-4.300" width="1.800" height="2.400" transform="rotate(180)"/><rect x="-.9" y="-4.300" width="1.800" height="2.400" transform="rotate(225)"/><rect x="-.9" y="-4.300" width="1.800" height="2.400" transform="rotate(270)"/><rect x="-.9" y="-4.300" width="1.800" height="2.400" transform="rotate(315)"/></g></svg>
<div class="a " style="left:157px;top:356px;width:14.5px;height:150px;background:#2b2b2b;"></div>
<svg class="a" style="left:160px;top:358.5px;" width="8" height="6" viewBox="0 0 8 6"><path d="M4 .8L7.2 5.2H.8z" fill="#bbb"/></svg>
<svg class="a" style="left:160px;top:498.5px;" width="8" height="6" viewBox="0 0 8 6"><path d="M4 5.2L7.2 .8H.8z" fill="#bbb"/></svg>
<div class="a " style="left:157.5px;top:372px;width:13.0px;height:69px;background:linear-gradient(to right,#6a6a6a,#7c7c7c 40%,#6e6e6e);border-radius:4px;"></div>
<div class="a btn" style="left:31.4px;top:509px;width:16.6px;height:17.5px;"></div>
<div class="a btn" style="left:51.5px;top:509px;width:16.5px;height:17.5px;"></div>
<div class="a btn" style="left:71.5px;top:509px;width:21.5px;height:17.5px;"></div>
<div class="a btn" style="left:97px;top:509px;width:17px;height:17.5px;"></div>
<div class="a btn" style="left:117px;top:509px;width:17px;height:17.5px;"></div>
<div class="a btn" style="left:137.5px;top:509px;width:17.0px;height:17.5px;"></div>
<div class="a " style="left:163px;top:508px;width:6px;height:18px;background:#4a4a4a;border-radius:2px;"></div>
<div class="a " style="left:173px;top:56px;width:654px;height:474px;background:#242424;"></div>
<div class="a " style="left:176px;top:55.8px;width:325px;height:14.7px;background:linear-gradient(#555555,#454545 30%,#2e2e2e);border-radius:2px 2px 0 0;"></div>
<div class="a t" style="left:321.7421875px;width:32.515625px;text-align:center;top:57.7px;font-size:9px;line-height:13px;color:#d8d8d8;transform:scaleX(0.9176);">Untitled</div>
<div class="a " style="left:176px;top:70.5px;width:633px;height:443.9px;background:#4a4745;"></div>
<div class="a " style="left:199.4px;top:73.1px;width:586.3px;height:439.9px;background:#fff;"></div>
<div class="a " style="left:809px;top:70.5px;width:14.5px;height:445.5px;background:linear-gradient(to right,#3a3a3a,#2c2c2c);"></div>
<div class="a " style="left:809px;top:72px;width:14px;height:8px;background:#20242a;"></div>
<div class="a " style="left:809.2px;top:504.7px;width:13.8px;height:11.3px;background:#20242a;"></div>
<svg class="a" style="left:812px;top:72.3px;" width="9" height="7" viewBox="0 0 9 7"><path d="M4.5 .8L8.2 6H.8z" fill="#c8c8c8"/></svg>
<svg class="a" style="left:811.6px;top:507.3px;" width="9" height="7" viewBox="0 0 9 7"><path d="M4.5 6.2L8.2 1H.8z" fill="#c8c8c8"/></svg>
<div class="a " style="left:810px;top:239.5px;width:13px;height:107.5px;background:linear-gradient(to right,#666,#7a7a7a 40%,#6c6c6c);border-radius:4px;"></div>
<div class="a " style="left:176px;top:514.4px;width:640px;height:15.6px;background:linear-gradient(#3c3c3c,#323232 55%,#2a2a2a);"></div>
<div class="a " style="left:176px;top:514.4px;width:8px;height:15.6px;background:#1e2834;"></div>
<div class="a " style="left:816px;top:516px;width:7.5px;height:14px;background:#20242a;"></div>
<svg class="a" style="left:176.7px;top:518.2px;" width="7" height="9" viewBox="0 0 7 9"><path d="M.8 4.5L6 .8v7.4z" fill="#c8c8c8"/></svg>
<svg class="a" style="left:816px;top:518.2px;" width="7" height="9" viewBox="0 0 7 9"><path d="M6.2 4.5L1 .8v7.4z" fill="#c8c8c8"/></svg>
<div class="a " style="left:420.1px;top:516.1px;width:159.0px;height:13.3px;background:linear-gradient(#666,#7a7a7a 40%,#6c6c6c);border-radius:4px;"></div>
<div class="a " style="left:823px;top:504px;width:1px;height:26px;background:#2c4a66;"></div>
<div class="a t" style="left:710.3px;top:75.9px;font-size:11.8px;line-height:17px;color:#333;transform:scaleX(1.0499);transform-origin:0 50%;">Heokon</div>
<div class="a t" style="left:710.8px;top:93.7px;font-size:11.8px;line-height:17px;color:#333;transform:scaleX(1.0920);transform-origin:0 50%;">#Hoidap247</div>
<svg class="a" style="left:0;top:0;" width="1024" height="576" viewBox="0 0 1024 576"><defs><radialGradient id="bl"><stop offset="0" stop-color="#ff4a3c" stop-opacity=".97"/><stop offset=".4" stop-color="#ff5044" stop-opacity=".92"/><stop offset=".66" stop-color="#ff6256" stop-opacity=".58"/><stop offset=".87" stop-color="#ff8278" stop-opacity=".16"/><stop offset="1" stop-color="#ff9a90" stop-opacity="0"/></radialGradient></defs><ellipse cx="346" cy="264.500" rx="31" ry="34" fill="url(#bl)"/><ellipse cx="538.500" cy="258" rx="32.500" ry="35.500" fill="url(#bl)"/><circle cx="342.5" cy="259.5" r="2.600" fill="#fffaf4"/><circle cx="352" cy="268" r="2.600" fill="#fffaf4"/><circle cx="338" cy="273" r="2.600" fill="#fffaf4"/><circle cx="536" cy="253" r="2.600" fill="#fffaf4"/><circle cx="544" cy="261" r="2.600" fill="#fffaf4"/><circle cx="530.5" cy="266" r="2.600" fill="#fffaf4"/><path d="M401 343.3 C398.8 343.0 393.5 342.6 387.5 341.5 C381.5 340.4 372.5 338.8 365 336.5 C357.5 334.2 348.3 330.7 342.5 328 C336.7 325.3 333.0 322.8 330 320.5 C327.0 318.2 326.2 317.4 324.5 314 C322.8 310.6 321.0 304.8 319.5 300 C318.0 295.2 316.4 290.3 315.5 285 C314.6 279.7 314.4 273.8 314.3 268 C314.2 262.2 314.2 257.0 315 250 C315.8 243.0 316.8 233.8 319 226 C321.2 218.2 323.9 210.7 328 203 C332.1 195.3 338.0 186.8 343.5 180 C349.0 173.2 353.9 168.2 361 162.5 C368.1 156.8 377.4 150.4 386 146 C394.6 141.6 403.5 138.3 412.5 136 C421.5 133.7 430.4 132.6 440 132.3 C449.6 132.0 460.4 132.5 470 134 C479.6 135.5 489.2 138.0 497.5 141.5 C505.8 145.0 512.9 149.4 520 155 C527.1 160.6 534.0 167.8 540 175 C546.0 182.2 551.7 190.2 556 198 C560.3 205.8 563.3 213.7 566 222 C568.7 230.3 570.9 240.7 572 248 C573.1 255.3 572.9 259.8 572.8 266 C572.7 272.2 572.0 279.2 571.2 285 C570.4 290.8 569.1 297.0 568 301 C566.9 305.0 566.0 306.6 564.5 309 C563.0 311.4 562.1 313.1 559 315.5 C555.9 317.9 552.1 320.7 546 323.3 C539.9 325.9 531.8 328.7 522.5 331 C513.2 333.3 499.8 335.6 490 337.3 C480.2 339.0 468.3 340.4 464 341" fill="none" stroke="#000" stroke-width="7.3" stroke-linecap="round" stroke-linejoin="round"/><path d="M401 343.3 L395.8 365.8 C408 366.6 420 366.6 430 366.2 C444 365.8 462 363.5 476 359.8 L463.8 341" fill="none" stroke="#000" stroke-width="7.4" stroke-linecap="round" stroke-linejoin="round"/><path d="M408 325 C411 322.5 414.500 320.500 417.500 318.800 C421 316.800 424 315.800 427 316 C430 316.500 430.800 318 430 321 C429 326 426.500 335 421.300 347.800" fill="none" stroke="#000" stroke-width="6.9" stroke-linecap="round" stroke-linejoin="round"/><path d="M453 328.800 C452 324.500 450.500 321 448 318.600 C446 316.700 443.500 315.800 441.500 316.200 C438.500 317 438.300 321 439.300 326 C440.300 331 441.800 336.500 443.800 341.500" fill="none" stroke="#000" stroke-width="6.8" stroke-linecap="round" stroke-linejoin="round"/><path d="M440.600 342.500 C442.500 347 445.500 352 448.600 355.600 C449.600 356.600 451 355.800 450.500 354.500 C448.800 350 447.600 345.500 446.800 340.500 Z" fill="#000"/><path d="M464 124 C458 120.500 453.500 113 452.800 105 C452.200 97 455 91 460 90.500 C465 90.300 469 96 469.800 104 C470.300 111 468 118.500 464 124 Z" fill="#63ff00" stroke="#000" stroke-width="6.800" stroke-linejoin="round"/><path d="M467 123.500 C469 114 476 104.500 486 101 C493 98.800 499 101.500 499.500 108 C499.800 115 494 122 486 124.800 C479 127 472 126 467 123.500 Z" fill="#63ff00" stroke="#000" stroke-width="6.800" stroke-linejoin="round"/><path d="M465 121.500 C462.500 127 460.300 133 459 140.500" fill="none" stroke="#000" stroke-width="6.600" stroke-linecap="round"/><path d="M404.300 246.600 C410 252.500 420 257.300 432.500 257.800 C445 257.300 455 252.800 461 247" fill="none" stroke="#000" stroke-width="4.700" stroke-linecap="round"/><path d="M366 224.200 C368 221.500 371 219 374 217.400 C377 216 380 215.300 382 215.500 C384.300 216 385 218 384 220 C383 221.500 381 222.200 378 222.800 C374 223.600 370 224.800 366.500 225 C365.800 225 365.600 224.600 366 224.200 Z" fill="#000"/><path d="M484.600 219.500 C484 217.500 485.500 215.800 488 215.900 C491 216.200 494.500 218.200 497.500 220.800 C501 223.800 504 227 506.300 230.300 C506.700 231 506 231.500 505.300 231.100 C501 229 497 227 492.500 225 C489 223.500 485.500 222 484.600 219.500 Z" fill="#000"/><path d="M372.300 234.500 C371.800 233 373.200 232.300 375 232.600 C378.500 233.300 382 234.300 385 235.600 C388 237 391 238.800 392.500 240.700 C394 243 393 245.800 390.500 246.800 C388 247.800 383 247.900 378 247.700 C374 247.500 370.500 247.200 368.300 246.600 C367 246.200 367 245 368 244.400 C370.500 243 373.500 241.600 377.200 240.100 C375 238.500 373 236.500 372.300 234.500 Z" fill="#000"/><circle cx="379.3" cy="237.6" r="1.25" fill="#fff"/><circle cx="383.9" cy="239.7" r="1.25" fill="#fff"/><circle cx="381.4" cy="244.2" r="1.25" fill="#fff"/><path d="M471.400 242.300 C471 240.500 473 238.800 475.300 237.500 C478 236 481 234.500 484 233.300 C486.500 232.400 489 231.900 490.500 232.300 C492.800 233 493.500 235.200 492.300 237 C491 238.800 488 240 484.500 241 C488 241.600 492 242.300 495.500 243.200 C498.500 244 501 245.500 502 247 C502.500 248 501.800 248.800 500.500 248.900 C496 249.200 490 248.600 484 247.500 C480 246.800 476 246.200 474 245.300 C472.500 244.600 471.700 243.600 471.400 242.300 Z" fill="#000"/><circle cx="479.75" cy="237.2" r="1.25" fill="#fff"/><circle cx="476.8" cy="239.9" r="1.25" fill="#fff"/><circle cx="482.8" cy="241.6" r="1.25" fill="#fff"/></svg>
<div class="a " style="left:827.5px;top:56px;width:196.5px;height:474px;background:#222222;"></div>
<div class="a " style="left:827.5px;top:57.199999999999996px;width:196.5px;height:14.9px;background:#383636;"></div>
<div class="a " style="left:827.5px;top:55.8px;width:196.5px;height:1.5px;background:linear-gradient(#6b98be,#3f6f98);"></div>
<div class="a t" style="left:895.2109375px;width:38.378125px;text-align:center;top:59.0px;font-size:8.5px;line-height:12px;color:#e4e4e4;transform:scaleX(0.9621);">Navigator</div>
<svg class="a" style="left:999.7px;top:59.199999999999996px;" width="10" height="10" viewBox="0 0 10 10"><path d="M6 2H1.5v6.5H8V5" fill="none" stroke="#ddd" stroke-width="1.1"/><path d="M5 5l3.5-3.5M6 1h3v3" fill="none" stroke="#ddd" stroke-width="1.1"/></svg>
<svg class="a" style="left:1012.3px;top:59.4px;" width="9" height="9" viewBox="0 0 9 9"><path d="M1.500 1.500l6 6M7.500 1.500l-6 6" stroke="#ececec" stroke-width="2.100"/></svg>
<div class="a " style="left:827.5px;top:73px;width:196.5px;height:21.5px;background:#242424;"></div>
<div class="a btn" style="left:830.5px;top:75px;width:17.0px;height:17.5px;"></div>
<div class="a btn" style="left:856px;top:75px;width:17px;height:17.5px;"></div>
<div class="a btn" style="left:876px;top:75px;width:17px;height:17.5px;"></div>
<div class="a btn" style="left:896px;top:75px;width:17.5px;height:17.5px;"></div>
<div class="a btn" style="left:922px;top:75px;width:17.5px;height:17.5px;"></div>
<div class="a btn" style="left:962.5px;top:75px;width:17.5px;height:17.5px;"></div>
<div class="a btn" style="left:988px;top:75px;width:17px;height:17.5px;"></div>
<div class="a " style="left:942px;top:75px;width:18px;height:17.5px;background:#282828;border-radius:2.5px;box-shadow:inset 0 0 0 .6px #4a4a4a;"></div>
<div class="a " style="left:851.5px;top:79px;width:1.0px;height:9px;background:#4a4a4a;"></div>
<div class="a " style="left:917.5px;top:79px;width:1.0px;height:9px;background:#4a4a4a;"></div>
<div class="a " style="left:983.5px;top:79px;width:1.0px;height:9px;background:#4a4a4a;"></div>
<div class="a " style="left:827.5px;top:94.5px;width:196.5px;height:19.0px;background:#474747;"></div>
<div class="a " style="left:914px;top:95.8px;width:24px;height:16.2px;background:#fff;border:1.4px solid #f01010;border-right-width:1.8px;"></div>
<svg class="a" style="left:914px;top:95.8px;" width="24" height="16.2" viewBox="0 0 24 16.2"><path d="M8.66 10.97 C6.25 10.65 5.38 9.66 5.22 7.77 C5.22 4.53 7.43 2.63 10.4 2.63 C13.36 2.71 15.49 4.92 15.41 7.92 C15.33 9.98 14.15 10.57 11.15 10.89 L11.62 11.64 L8.46 11.87 Z" fill="#fff" stroke="#555" stroke-width="0.75"/><circle cx="6.45" cy="7.88" r="1.03" fill="#ff8070" opacity=".8"/><circle cx="14.03" cy="7.69" r="1.03" fill="#ff8070" opacity=".8"/><path d="M8.78 7.17 Q9.88 8.08 11.03 7.17" stroke="#555" stroke-width="0.5249999999999999" fill="none"/><path d="M7.36 6.9h0.95M11.46 6.9h1.11" stroke="#555" stroke-width="0.75"/><path d="M10.95 2.95L11.19 2.16" stroke="#555" stroke-width="0.75"/><circle cx="11.38" cy="1.68" r="0.55" fill="#5c5" stroke="#555" stroke-width="0.44999999999999996"/></svg>
<div class="a " style="left:827.5px;top:117.2px;width:196.5px;height:14.9px;background:#383636;"></div>
<div class="a " style="left:827.5px;top:115.8px;width:196.5px;height:1.5px;background:linear-gradient(#6b98be,#3f6f98);"></div>
<div class="a t" style="left:902.86875px;width:23.2625px;text-align:center;top:119.0px;font-size:8.5px;line-height:12px;color:#e4e4e4;transform:scaleX(0.9547);">Layer</div>
<svg class="a" style="left:999.7px;top:119.2px;" width="10" height="10" viewBox="0 0 10 10"><path d="M6 2H1.5v6.5H8V5" fill="none" stroke="#ddd" stroke-width="1.1"/><path d="M5 5l3.5-3.5M6 1h3v3" fill="none" stroke="#ddd" stroke-width="1.1"/></svg>
<svg class="a" style="left:1012.3px;top:119.39999999999999px;" width="9" height="9" viewBox="0 0 9 9"><path d="M1.500 1.500l6 6M7.500 1.500l-6 6" stroke="#ececec" stroke-width="2.100"/></svg>
<div class="a t" style="left:832px;top:136.5px;font-size:9px;line-height:13px;color:#d8d8d8;transform:scaleX(0.9177);transform-origin:0 50%;">Opacity</div>
<div class="a " style="left:881px;top:137px;width:110px;height:11px;background:linear-gradient(to right,#68b4ee,#4a96d6);"></div>
<div class="a t" style="left:996px;top:136.5px;font-size:9px;line-height:13px;color:#d8d8d8;transform:scaleX(0.9013);transform-origin:0 50%;">100 %</div>
<div class="a t" style="left:832px;top:155.0px;font-size:9px;line-height:13px;color:#d8d8d8;transform:scaleX(0.8564);transform-origin:0 50%;">Blending</div>
<div class="a " style="left:882.5px;top:153.5px;width:136.5px;height:15.5px;background:#444;border-radius:2px;"></div>
<div class="a t" style="left:884.5px;top:155.0px;font-size:9px;line-height:13px;color:#d8d8d8;transform:scaleX(0.8792);transform-origin:0 50%;">Normal</div>
<svg class="a" style="left:1009px;top:159px;" width="8" height="5" viewBox="0 0 8 5"><path d="M1 .5h6L4 4z" fill="#aaa"/></svg>
<div class="a " style="left:834.5px;top:177.5px;width:8.0px;height:8.0px;border:1px solid #ddd;"></div>
<div class="a t" style="left:847px;top:175.0px;font-size:9px;line-height:13px;color:#d8d8d8;transform:scaleX(0.9059);transform-origin:0 50%;">Protect Alpha</div>
<div class="a " style="left:905px;top:177.5px;width:7.5px;height:8.0px;border:1px solid #555;"></div>
<div class="a t" style="left:917.5px;top:175.0px;font-size:9px;line-height:13px;color:#6e6e6e;transform:scaleX(0.8610);transform-origin:0 50%;">Clipping</div>
<div class="a " style="left:965px;top:177.5px;width:8px;height:8.0px;border:1px solid #ddd;"></div>
<div class="a t" style="left:977.5px;top:175.0px;font-size:9px;line-height:13px;color:#d8d8d8;transform:scaleX(0.8416);transform-origin:0 50%;">Lock</div>
<div class="a " style="left:829.5px;top:192px;width:177.5px;height:137px;background:#474747;"></div>
<div class="a " style="left:829.5px;top:192px;width:177.5px;height:29px;background:#5a5a5a;"></div>
<div class="a " style="left:829.5px;top:221.7px;width:14.5px;height:28.6px;background:#5a5a5a;"></div>
<div class="a " style="left:844px;top:221.7px;width:163px;height:28.6px;background:#4a98d6;"></div>
<div class="a " style="left:832.9px;top:202.4px;width:7.2px;height:7.2px;background:radial-gradient(circle at 45% 40%,#e0e0e0,#b0b0b0);border-radius:50%;"></div>
<div class="a " style="left:832.9px;top:232.5px;width:7.2px;height:7.2px;background:radial-gradient(circle at 45% 40%,#e0e0e0,#b0b0b0);border-radius:50%;"></div>
<div class="a " style="left:855px;top:200.8px;width:26.2px;height:11.4px;background:#f6f6f6;"></div>
<svg class="a" style="left:855px;top:201px;" width="26.2" height="11" viewBox="0 0 26.2 11"><g fill="#777"><rect x="1" y="1.5" width="13" height="1.6"/><rect x="1" y="3.1" width="2" height="2"/><rect x="5" y="3.1" width="2" height="2"/><rect x="9" y="3.1" width="2" height="2"/><rect x="12.5" y="3.1" width="2" height="2"/><rect x="1" y="6.5" width="20" height="1.5"/><rect x="1" y="8" width="2" height="2"/><rect x="4.5" y="8" width="2" height="2"/><rect x="8" y="8" width="2" height="2"/><rect x="11.5" y="8" width="2" height="2"/><rect x="15" y="8" width="2" height="2"/><rect x="18.5" y="8" width="2" height="2"/></g><g fill="#ddd"><rect x="16" y="0" width="3" height="3"/><rect x="22" y="0" width="3" height="3"/><rect x="19" y="3" width="3" height="3"/><rect x="25" y="3" width="2.5" height="3"/><rect x="22" y="6" width="3" height="3"/></g></svg>
<div class="a " style="left:855px;top:227.1px;width:26.2px;height:18.2px;background:#fff;"></div>
<svg class="a" style="left:855px;top:227.1px;" width="26.2" height="18.2" viewBox="0 0 26.2 18.2"><rect x="0.00" y="0.00" width="3.05" height="3.1" fill="#dcdcdc"/><rect x="0.00" y="6.20" width="3.05" height="3.1" fill="#dcdcdc"/><rect x="0.00" y="12.40" width="3.05" height="3.1" fill="#dcdcdc"/><rect x="3.05" y="3.10" width="3.05" height="3.1" fill="#dcdcdc"/><rect x="3.05" y="9.30" width="3.05" height="3.1" fill="#dcdcdc"/><rect x="3.05" y="15.50" width="3.05" height="3.1" fill="#dcdcdc"/><rect x="6.10" y="0.00" width="3.05" height="3.1" fill="#dcdcdc"/><rect x="6.10" y="6.20" width="3.05" height="3.1" fill="#dcdcdc"/><rect x="6.10" y="12.40" width="3.05" height="3.1" fill="#dcdcdc"/><rect x="9.15" y="3.10" width="3.05" height="3.1" fill="#dcdcdc"/><rect x="9.15" y="9.30" width="3.05" height="3.1" fill="#dcdcdc"/><rect x="9.15" y="15.50" width="3.05" height="3.1" fill="#dcdcdc"/><rect x="12.20" y="0.00" width="3.05" height="3.1" fill="#dcdcdc"/><rect x="12.20" y="6.20" width="3.05" height="3.1" fill="#dcdcdc"/><rect x="12.20" y="12.40" width="3.05" height="3.1" fill="#dcdcdc"/><rect x="15.25" y="3.10" width="3.05" height="3.1" fill="#dcdcdc"/><rect x="15.25" y="9.30" width="3.05" height="3.1" fill="#dcdcdc"/><rect x="15.25" y="15.50" width="3.05" height="3.1" fill="#dcdcdc"/><rect x="18.30" y="0.00" width="3.05" height="3.1" fill="#dcdcdc"/><rect x="18.30" y="6.20" width="3.05" height="3.1" fill="#dcdcdc"/><rect x="18.30" y="12.40" width="3.05" height="3.1" fill="#dcdcdc"/><rect x="21.35" y="3.10" width="3.05" height="3.1" fill="#dcdcdc"/><rect x="21.35" y="9.30" width="3.05" height="3.1" fill="#dcdcdc"/><rect x="21.35" y="15.50" width="3.05" height="3.1" fill="#dcdcdc"/><rect x="24.40" y="0.00" width="3.05" height="3.1" fill="#dcdcdc"/><rect x="24.40" y="6.20" width="3.05" height="3.1" fill="#dcdcdc"/><rect x="24.40" y="12.40" width="3.05" height="3.1" fill="#dcdcdc"/><path d="M8.95 11.99 C6.24 11.63 5.26 10.52 5.08 8.39 C5.08 4.75 7.57 2.62 10.9 2.62 C14.23 2.71 16.63 5.19 16.54 8.57 C16.45 10.88 15.12 11.54 11.74 11.9 L12.28 12.74 L8.72 13.01 Z" fill="#fff" stroke="#6a4a4a" stroke-width="0.8"/><circle cx="6.46" cy="8.52" r="1.15" fill="#ff8070" opacity=".8"/><circle cx="14.99" cy="8.3" r="1.15" fill="#ff8070" opacity=".8"/><path d="M9.08 7.73 Q10.32 8.75 11.61 7.73" stroke="#6a4a4a" stroke-width="0.5599999999999999" fill="none"/><path d="M7.48 7.41h1.07M12.1 7.41h1.24" stroke="#6a4a4a" stroke-width="0.8"/><path d="M11.52 2.97L11.79 2.09" stroke="#6a4a4a" stroke-width="0.8"/><circle cx="12.01" cy="1.55" r="0.62" fill="#5c5" stroke="#6a4a4a" stroke-width="0.48"/></svg>
<div class="a t" style="left:893.5px;top:199.6px;font-size:10px;line-height:14px;color:#f4f4f4;transform:scaleX(0.9197);transform-origin:0 50%;">Heokon</div>
<div class="a t" style="left:893.5px;top:229.7px;font-size:10px;line-height:14px;color:#fff;font-weight:bold;transform:scaleX(1.0420);transform-origin:0 50%;">Layer1</div>
<svg class="a" style="left:990.5px;top:230px;" width="14" height="14" viewBox="0 0 14 14"><g transform="translate(7 7)" fill="#fff"><circle r="4.3"/><rect x="-1.5" y="-6.7" width="3" height="4" transform="rotate(0)"/><rect x="-1.5" y="-6.7" width="3" height="4" transform="rotate(45)"/><rect x="-1.5" y="-6.7" width="3" height="4" transform="rotate(90)"/><rect x="-1.5" y="-6.7" width="3" height="4" transform="rotate(135)"/><rect x="-1.5" y="-6.7" width="3" height="4" transform="rotate(180)"/><rect x="-1.5" y="-6.7" width="3" height="4" transform="rotate(225)"/><rect x="-1.5" y="-6.7" width="3" height="4" transform="rotate(270)"/><rect x="-1.5" y="-6.7" width="3" height="4" transform="rotate(315)"/><circle r="1.9" fill="#4a98d6"/></g></svg>
<div class="a " style="left:1008px;top:192px;width:14px;height:137px;background:#2b2b2b;"></div>
<svg class="a" style="left:1011px;top:193.5px;" width="8" height="6" viewBox="0 0 8 6"><path d="M4 .8L7.2 5.2H.8z" fill="#bbb"/></svg>
<svg class="a" style="left:1011px;top:322.5px;" width="8" height="6" viewBox="0 0 8 6"><path d="M4 5.2L7.2 .8H.8z" fill="#bbb"/></svg>
<div class="a " style="left:1008.5px;top:200px;width:13.0px;height:120.5px;background:linear-gradient(to right,#6a6a6a,#7c7c7c 40%,#6e6e6e);border-radius:4px;"></div>
<div class="a btn" style="left:832px;top:333px;width:17px;height:17.5px;"></div>
<div class="a btn" style="left:852.5px;top:333px;width:17.0px;height:17.5px;"></div>
<div class="a btn" style="left:872.5px;top:333px;width:17.5px;height:17.5px;"></div>
<div class="a btn" style="left:893px;top:333px;width:22.5px;height:17.5px;"></div>
<div class="a btn" style="left:918px;top:333px;width:18px;height:17.5px;"></div>
<div class="a btn" style="left:943.5px;top:333px;width:17.5px;height:17.5px;"></div>
<div class="a btn" style="left:989px;top:333px;width:17px;height:17.5px;"></div>
<div class="a " style="left:964px;top:333px;width:17.5px;height:17.5px;background:#262626;border-radius:2.5px;box-shadow:inset 0 0 0 .6px #4a4a4a;"></div>
<div class="a " style="left:939.5px;top:337px;width:1.0px;height:9px;background:#4a4a4a;"></div>
<div class="a " style="left:985px;top:337px;width:1px;height:9px;background:#4a4a4a;"></div>
<div class="a " style="left:829.5px;top:352.5px;width:192.5px;height:2.0px;background:#1a1a1a;border-top:1px solid #3a3a3a;"></div>
<div class="a " style="left:827.5px;top:359.59999999999997px;width:196.5px;height:14.9px;background:#383636;"></div>
<div class="a " style="left:827.5px;top:358.2px;width:196.5px;height:1.5px;background:linear-gradient(#6b98be,#3f6f98);"></div>
<div class="a t" style="left:892.94921875px;width:43.1015625px;text-align:center;top:361.4px;font-size:8.5px;line-height:12px;color:#e4e4e4;transform:scaleX(0.9051);">Brush Size</div>
<svg class="a" style="left:999.7px;top:361.59999999999997px;" width="10" height="10" viewBox="0 0 10 10"><path d="M6 2H1.5v6.5H8V5" fill="none" stroke="#ddd" stroke-width="1.1"/><path d="M5 5l3.5-3.5M6 1h3v3" fill="none" stroke="#ddd" stroke-width="1.1"/></svg>
<svg class="a" style="left:1012.3px;top:361.8px;" width="9" height="9" viewBox="0 0 9 9"><path d="M1.500 1.500l6 6M7.500 1.500l-6 6" stroke="#ececec" stroke-width="2.100"/></svg>
<div class="a " style="left:827.5px;top:374.5px;width:180.5px;height:155.5px;background:#3c3c3c;"></div>
<div class="a " style="left:828px;top:375.2px;width:29.2px;height:36.4px;background:#595959;"></div>
<div class="a t" style="left:839.553515625px;width:5.89296875px;text-align:center;top:401.6px;font-size:7px;line-height:10px;color:#f0f0f0;transform:scaleX(1.0000);">1</div>
<div class="a " style="left:858px;top:375.2px;width:29.2px;height:36.4px;background:#595959;"></div>
<div class="a t" style="left:866.634765625px;width:11.73046875px;text-align:center;top:401.6px;font-size:7px;line-height:10px;color:#f0f0f0;transform:scaleX(1.0000);">1.5</div>
<div class="a " style="left:888px;top:375.2px;width:29.2px;height:36.4px;background:#595959;"></div>
<div class="a t" style="left:899.553515625px;width:5.89296875px;text-align:center;top:401.6px;font-size:7px;line-height:10px;color:#f0f0f0;transform:scaleX(1.0000);">2</div>
<div class="a " style="left:918px;top:375.2px;width:29.2px;height:36.4px;background:#595959;"></div>
<div class="a t" style="left:929.553515625px;width:5.89296875px;text-align:center;top:401.6px;font-size:7px;line-height:10px;color:#f0f0f0;transform:scaleX(1.0000);">3</div>
<div class="a " style="left:948px;top:375.2px;width:29.2px;height:36.4px;background:#595959;"></div>
<div class="a t" style="left:959.553515625px;width:5.89296875px;text-align:center;top:401.6px;font-size:7px;line-height:10px;color:#f0f0f0;transform:scaleX(1.0000);">4</div>
<div class="a " style="left:978px;top:375.2px;width:29.2px;height:36.4px;background:#595959;"></div>
<div class="a t" style="left:989.553515625px;width:5.89296875px;text-align:center;top:401.6px;font-size:7px;line-height:10px;color:#f0f0f0;transform:scaleX(1.0000);">5</div>
<div class="a " style="left:828px;top:412.3px;width:29.2px;height:36.7px;background:#595959;"></div>
<div class="a t" style="left:839.553515625px;width:5.89296875px;text-align:center;top:439.2px;font-size:7px;line-height:10px;color:#f0f0f0;transform:scaleX(1.0000);">7</div>
<div class="a " style="left:858px;top:412.3px;width:29.2px;height:36.7px;background:#595959;"></div>
<div class="a t" style="left:867.60703125px;width:9.7859375px;text-align:center;top:439.2px;font-size:7px;line-height:10px;color:#f0f0f0;transform:scaleX(1.0000);">10</div>
<div class="a " style="left:888px;top:412.3px;width:29.2px;height:36.7px;background:#595959;"></div>
<div class="a t" style="left:897.60703125px;width:9.7859375px;text-align:center;top:439.2px;font-size:7px;line-height:10px;color:#f0f0f0;transform:scaleX(1.0000);">12</div>
<div class="a " style="left:918px;top:412.3px;width:29.2px;height:36.7px;background:#595959;"></div>
<div class="a t" style="left:927.60703125px;width:9.7859375px;text-align:center;top:439.2px;font-size:7px;line-height:10px;color:#f0f0f0;transform:scaleX(1.0000);">15</div>
<div class="a " style="left:948px;top:412.3px;width:29.2px;height:36.7px;background:#595959;"></div>
<div class="a t" style="left:957.60703125px;width:9.7859375px;text-align:center;top:439.2px;font-size:7px;line-height:10px;color:#f0f0f0;transform:scaleX(1.0000);">20</div>
<div class="a " style="left:978px;top:412.3px;width:29.2px;height:36.7px;background:#595959;"></div>
<div class="a t" style="left:987.60703125px;width:9.7859375px;text-align:center;top:439.2px;font-size:7px;line-height:10px;color:#f0f0f0;transform:scaleX(1.0000);">25</div>
<div class="a " style="left:828px;top:449.7px;width:29.2px;height:36.5px;background:#595959;"></div>
<div class="a t" style="left:837.60703125px;width:9.7859375px;text-align:center;top:476.8px;font-size:7px;line-height:10px;color:#f0f0f0;transform:scaleX(1.0000);">30</div>
<div class="a " style="left:858px;top:449.7px;width:29.2px;height:36.5px;background:#595959;"></div>
<div class="a t" style="left:867.60703125px;width:9.7859375px;text-align:center;top:476.8px;font-size:7px;line-height:10px;color:#f0f0f0;transform:scaleX(1.0000);">40</div>
<div class="a " style="left:888px;top:449.7px;width:29.2px;height:36.5px;background:#595959;"></div>
<div class="a t" style="left:897.60703125px;width:9.7859375px;text-align:center;top:476.8px;font-size:7px;line-height:10px;color:#f0f0f0;transform:scaleX(1.0000);">50</div>
<div class="a " style="left:918px;top:449.7px;width:29.2px;height:36.5px;background:#595959;"></div>
<div class="a t" style="left:927.60703125px;width:9.7859375px;text-align:center;top:476.8px;font-size:7px;line-height:10px;color:#f0f0f0;transform:scaleX(1.0000);">70</div>
<div class="a " style="left:948px;top:449.7px;width:29.2px;height:36.5px;background:#595959;"></div>
<div class="a t" style="left:955.660546875px;width:13.67890625px;text-align:center;top:476.8px;font-size:7px;line-height:10px;color:#f0f0f0;transform:scaleX(1.0000);">100</div>
<div class="a " style="left:978px;top:449.7px;width:29.2px;height:36.5px;background:#595959;"></div>
<div class="a t" style="left:985.660546875px;width:13.67890625px;text-align:center;top:476.8px;font-size:7px;line-height:10px;color:#f0f0f0;transform:scaleX(1.0000);">150</div>
<div class="a " style="left:828px;top:486.9px;width:29.2px;height:36.5px;background:#595959;"></div>
<div class="a t" style="left:835.660546875px;width:13.67890625px;text-align:center;top:514.4px;font-size:7px;line-height:10px;color:#f0f0f0;transform:scaleX(1.0000);">200</div>
<div class="a " style="left:858px;top:486.9px;width:29.2px;height:36.5px;background:#595959;"></div>
<div class="a t" style="left:865.660546875px;width:13.67890625px;text-align:center;top:514.4px;font-size:7px;line-height:10px;color:#f0f0f0;transform:scaleX(1.0000);">300</div>
<div class="a " style="left:888px;top:486.9px;width:29.2px;height:36.5px;background:#595959;"></div>
<div class="a t" style="left:895.660546875px;width:13.67890625px;text-align:center;top:514.4px;font-size:7px;line-height:10px;color:#f0f0f0;transform:scaleX(1.0000);">400</div>
<div class="a " style="left:918px;top:486.9px;width:29.2px;height:36.5px;background:#595959;"></div>
<div class="a t" style="left:925.660546875px;width:13.67890625px;text-align:center;top:514.4px;font-size:7px;line-height:10px;color:#f0f0f0;transform:scaleX(1.0000);">500</div>
<div class="a " style="left:948px;top:486.9px;width:29.2px;height:36.5px;background:#595959;"></div>
<div class="a t" style="left:955.660546875px;width:13.67890625px;text-align:center;top:514.4px;font-size:7px;line-height:10px;color:#f0f0f0;transform:scaleX(1.0000);">700</div>
<div class="a " style="left:978px;top:486.9px;width:29.2px;height:36.5px;background:#595959;"></div>
<div class="a t" style="left:983.7140625px;width:17.571875px;text-align:center;top:514.4px;font-size:7px;line-height:10px;color:#f0f0f0;transform:scaleX(1.0000);">1000</div>
<svg class="a" style="left:0;top:0;" width="1024" height="576" viewBox="0 0 1024 576"><circle cx="842.5" cy="389.3" r="0.2" fill="#f2f2f2" opacity=".6"/><circle cx="872.5" cy="389.3" r="0.4" fill="#f2f2f2" opacity=".6"/><circle cx="902.5" cy="389.3" r="0.65" fill="#f2f2f2"/><circle cx="932.5" cy="389.3" r="1.0" fill="#f2f2f2"/><circle cx="962.5" cy="389.3" r="1.65" fill="#f2f2f2"/><circle cx="992.5" cy="389.3" r="2.2" fill="#f2f2f2"/><circle cx="842.5" cy="426.7" r="2.5" fill="#f2f2f2"/><circle cx="872.5" cy="426.7" r="3.9" fill="#f2f2f2"/><circle cx="902.5" cy="426.7" r="4.75" fill="#f2f2f2"/><circle cx="932.5" cy="426.7" r="6.0" fill="#f2f2f2"/><circle cx="962.5" cy="426.7" r="7.8" fill="#f2f2f2"/><circle cx="992.5" cy="426.7" r="9.4" fill="#f2f2f2"/><circle cx="842.5" cy="464.2" r="9.4" fill="#f2f2f2"/><circle cx="872.5" cy="464.2" r="9.4" fill="#f2f2f2"/><circle cx="902.5" cy="464.2" r="9.4" fill="#f2f2f2"/><circle cx="932.5" cy="464.2" r="9.4" fill="#f2f2f2"/><circle cx="962.5" cy="464.2" r="9.4" fill="#f2f2f2"/><circle cx="992.5" cy="464.2" r="9.4" fill="#f2f2f2"/><circle cx="842.5" cy="502" r="9.4" fill="#f2f2f2"/><circle cx="872.5" cy="502" r="9.4" fill="#f2f2f2"/><circle cx="902.5" cy="502" r="9.4" fill="#f2f2f2"/><circle cx="932.5" cy="502" r="9.4" fill="#f2f2f2"/><circle cx="962.5" cy="502" r="9.4" fill="#f2f2f2"/><circle cx="992.5" cy="502" r="9.4" fill="#f2f2f2"/></svg>
<div class="a " style="left:827.5px;top:524.2px;width:180.5px;height:4.3px;background:#595959;"></div>
<div class="a " style="left:827.5px;top:528.5px;width:180.5px;height:1.5px;background:#2a2a2a;"></div>
<div class="a " style="left:1008px;top:375.5px;width:14.5px;height:154.5px;background:#2b2b2b;"></div>
<svg class="a" style="left:1011px;top:376.5px;" width="8" height="6" viewBox="0 0 8 6"><path d="M4 .8L7.2 5.2H.8z" fill="#bbb"/></svg>
<svg class="a" style="left:1011px;top:522.5px;" width="8" height="6" viewBox="0 0 8 6"><path d="M4 5.2L7.2 .8H.8z" fill="#bbb"/></svg>
<div class="a " style="left:1009px;top:383.5px;width:13px;height:136.5px;background:linear-gradient(to right,#6a6a6a,#7c7c7c 40%,#6e6e6e);border-radius:4px;"></div>
<div class="a " style="left:0px;top:547px;width:1024px;height:29px;background:linear-gradient(to right,#12110f 0%,#14120e 34%,#221c0e 42%,#26200f 55%,#221a10 66%,#1a1a10 74%,#1c2616 82%,#18180f 88%,#121210 100%);"></div>
<div class="a " style="left:0px;top:547px;width:1024px;height:1px;background:rgba(255,255,255,.18);"></div>
<div class="a " style="left:790px;top:548px;width:110px;height:28px;background:radial-gradient(ellipse at center,rgba(50,80,45,.55),rgba(0,0,0,0) 70%);"></div>
<div class="a " style="left:640px;top:548px;width:140px;height:28px;background:radial-gradient(ellipse at center,rgba(70,30,15,.45),rgba(0,0,0,0) 70%);"></div>
<svg class="a" style="left:0;top:548px;" width="1024" height="28" viewBox="0 548 1024 28"><g filter="url(#tb)"><ellipse cx="587" cy="553" rx="15" ry="4" fill="#0c0a08" opacity=".7"/><ellipse cx="444" cy="565" rx="18" ry="4" fill="#3a2c10" opacity=".7"/><ellipse cx="656" cy="551" rx="8" ry="5" fill="#0c0a08" opacity=".7"/><ellipse cx="462" cy="555" rx="15" ry="7" fill="#0c0a08" opacity=".7"/><ellipse cx="751" cy="550" rx="10" ry="5" fill="#2a1a0e" opacity=".7"/><ellipse cx="566" cy="553" rx="8" ry="5" fill="#33300f" opacity=".7"/><ellipse cx="498" cy="565" rx="15" ry="5" fill="#0c0a08" opacity=".7"/><ellipse cx="830" cy="564" rx="14" ry="5" fill="#1c2a16" opacity=".7"/><ellipse cx="652" cy="557" rx="14" ry="5" fill="#34280e" opacity=".7"/><ellipse cx="540" cy="554" rx="16" ry="4" fill="#40300c" opacity=".7"/><ellipse cx="713" cy="573" rx="16" ry="5" fill="#3a2010" opacity=".7"/><ellipse cx="459" cy="560" rx="16" ry="4" fill="#1a140a" opacity=".7"/><ellipse cx="649" cy="575" rx="8" ry="5" fill="#34280e" opacity=".7"/><ellipse cx="598" cy="558" rx="13" ry="6" fill="#3a2c10" opacity=".7"/><ellipse cx="910" cy="575" rx="13" ry="6" fill="#141410" opacity=".7"/><ellipse cx="842" cy="557" rx="14" ry="6" fill="#0e120c" opacity=".7"/><ellipse cx="563" cy="559" rx="15" ry="4" fill="#1a140a" opacity=".7"/><ellipse cx="607" cy="565" rx="13" ry="4" fill="#40300c" opacity=".7"/><ellipse cx="466" cy="556" rx="12" ry="7" fill="#3a2c10" opacity=".7"/><ellipse cx="489" cy="560" rx="10" ry="4" fill="#1a140a" opacity=".7"/><ellipse cx="925" cy="557" rx="12" ry="5" fill="#1c1c14" opacity=".7"/><ellipse cx="984" cy="553" rx="9" ry="4" fill="#141410" opacity=".7"/><ellipse cx="393" cy="571" rx="9" ry="4" fill="#2e2a12" opacity=".7"/><ellipse cx="647" cy="559" rx="14" ry="7" fill="#2e2a12" opacity=".7"/><ellipse cx="922" cy="575" rx="15" ry="6" fill="#1c1c14" opacity=".7"/><ellipse cx="947" cy="570" rx="17" ry="6" fill="#1c1c14" opacity=".7"/><ellipse cx="634" cy="560" rx="13" ry="5" fill="#2e2a12" opacity=".7"/><ellipse cx="427" cy="555" rx="9" ry="5" fill="#3a2c10" opacity=".7"/><ellipse cx="449" cy="564" rx="13" ry="7" fill="#0c0a08" opacity=".7"/><ellipse cx="401" cy="573" rx="14" ry="4" fill="#40300c" opacity=".7"/><ellipse cx="982" cy="565" rx="13" ry="4" fill="#1c1c14" opacity=".7"/><ellipse cx="1006" cy="562" rx="13" ry="4" fill="#141410" opacity=".7"/><ellipse cx="854" cy="569" rx="13" ry="6" fill="#1c2a16" opacity=".7"/><ellipse cx="399" cy="575" rx="13" ry="4" fill="#0c0a08" opacity=".7"/><ellipse cx="956" cy="569" rx="11" ry="6" fill="#141410" opacity=".7"/><ellipse cx="820" cy="556" rx="11" ry="4" fill="#2a3c20" opacity=".7"/><ellipse cx="718" cy="570" rx="11" ry="4" fill="#2a1a0e" opacity=".7"/><ellipse cx="889" cy="571" rx="16" ry="4" fill="#1c2a16" opacity=".7"/><ellipse cx="693" cy="569" rx="19" ry="6" fill="#120e0a" opacity=".7"/><ellipse cx="547" cy="568" rx="18" ry="5" fill="#33300f" opacity=".7"/><ellipse cx="1003" cy="575" rx="11" ry="4" fill="#141410" opacity=".7"/><ellipse cx="679" cy="558" rx="13" ry="7" fill="#0c0a08" opacity=".7"/><ellipse cx="910" cy="562" rx="15" ry="6" fill="#141410" opacity=".7"/><ellipse cx="907" cy="552" rx="12" ry="6" fill="#141410" opacity=".7"/><ellipse cx="684" cy="554" rx="16" ry="5" fill="#2e2a12" opacity=".7"/><ellipse cx="632" cy="560" rx="18" ry="6" fill="#2e2a12" opacity=".7"/></g><defs><filter id="tb" x="-5%" y="-50%" width="110%" height="200%"><feGaussianBlur stdDeviation="3"/></filter></defs></svg>
<div class="a " style="left:196px;top:547px;width:44px;height:28.2px;background:linear-gradient(#8c8a84,#63615b 35%,#3a3833 70%,#2e2c28);border:1px solid #a8a6a0;border-radius:2px;box-shadow:inset 0 0 2px rgba(255,255,255,.3);"></div>
<div class="a " style="left:243px;top:547px;width:43.5px;height:28.2px;background:linear-gradient(to right,#8a8884,#a09e9a 50%,#8a8884);border:1px solid #d4d4d4;border-radius:2px;box-shadow:inset 0 0 2px rgba(255,255,255,.5);"></div>
<div class="a " style="left:289.5px;top:547px;width:43.5px;height:28.2px;background:linear-gradient(#8c8a84,#63615b 35%,#3a3833 70%,#2e2c28);border:1px solid #a8a6a0;border-radius:2px;box-shadow:inset 0 0 2px rgba(255,255,255,.3);"></div>
<div class="a " style="left:336px;top:547px;width:43.5px;height:28.2px;background:linear-gradient(#8c8a84,#63615b 35%,#3a3833 70%,#2e2c28);border:1px solid #a8a6a0;border-radius:2px;box-shadow:inset 0 0 2px rgba(255,255,255,.3);"></div>
<div class="a t" style="left:923px;top:553.3px;font-size:9px;line-height:13px;color:#e8e8e8;transform:scaleX(0.9198);transform-origin:0 50%;">EN</div>
<svg class="a" style="left:946px;top:558.5px;" width="8" height="6" viewBox="0 0 8 6"><path d="M4 1L7 5H1z" fill="#fff"/></svg>
<div class="a t" style="left:966.8px;top:547.1px;font-size:9.5px;line-height:13px;color:#fff;transform:scaleX(0.9238);transform-origin:0 50%;">5:03 AM</div>
<div class="a t" style="left:963.6px;top:561.1px;font-size:9.5px;line-height:13px;color:#fff;transform:scaleX(0.9086);transform-origin:0 50%;">10/3/2021</div>
<div class="a " style="left:1013px;top:548px;width:10px;height:28px;background:linear-gradient(to bottom,#4a4a4a,#1c1c1c 40%,#101010);border:1px solid #555;border-top:none;"></div>
<svg class="a" style="left:5px;top:546.5px;" width="30" height="29.5" viewBox="0 0 30 29.5"><defs><radialGradient id="orb" cx=".5" cy=".35" r=".7"><stop offset="0" stop-color="#9ad4f4"/><stop offset=".45" stop-color="#2f86c8"/><stop offset=".8" stop-color="#14508c"/><stop offset="1" stop-color="#0a2c5a"/></radialGradient><radialGradient id="orbg" cx=".5" cy="1" r=".6"><stop offset="0" stop-color="#7fe4ff" stop-opacity=".9"/><stop offset="1" stop-color="#7fe4ff" stop-opacity="0"/></radialGradient></defs><circle cx="15" cy="14.800" r="13.600" fill="url(#orb)" stroke="#0c2a4c" stroke-width=".8"/><circle cx="15" cy="14.800" r="13.200" fill="url(#orbg)"/><path d="M9 9.800c1.800-1 3.500-1 5.200 0l-1 4.400c-1.700-1-3.400-1-5.300 0z" fill="#f25c1c"/><path d="M15.600 10.200c1.800 1 3.500 1 5.300 0l-1.100 4.400c-1.800 1-3.500 1-5.300 0z" fill="#8cc83c"/><path d="M7.600 15.400c1.800-1 3.500-1 5.300 0l-1.100 4.400c-1.800-1-3.500-1-5.300 0z" fill="#3c9ce8"/><path d="M14.200 15.800c1.800 1 3.500 1 5.300 0l-1.100 4.400c-1.800 1-3.500 1-5.300 0z" fill="#fcc41c"/><ellipse cx="15" cy="7.500" rx="9.500" ry="5" fill="#fff" opacity=".22"/></svg>
<svg class="a" style="left:66px;top:550px;" width="24" height="21" viewBox="0 0 24 21"><path d="M1.800 2l10.600 8.600L1.800 19.200z" fill="#6a35dc"/><path d="M22.600 2.200L10.500 10.600l12.100 8.400z" fill="#cdb4fa"/><path d="M12.400 10.600L9 7.800v5.600z" fill="#9a72ee"/></svg>
<svg class="a" style="left:111px;top:548px;" width="28" height="27" viewBox="0 0 28 27"><defs><linearGradient id="ieb" x1="0" y1="0" x2="0" y2="1"><stop offset="0" stop-color="#5ec8f8"/><stop offset="1" stop-color="#1668c0"/></linearGradient></defs><path d="M14.500 5.500c-5 0-8.600 3.600-8.600 8.400s3.600 8.400 8.600 8.400c3.600 0 6.400-1.800 7.700-4.800h-4.600c-.7 1-1.800 1.500-3.100 1.500-2.200 0-3.700-1.400-4-3.600h12.200c.5-5.600-3-9.900-8.200-9.900zm-3.900 6.800c.5-1.900 1.900-3 3.900-3s3.400 1.100 3.800 3z" fill="url(#ieb)"/><path d="M24.600 3.200c-2.200-1.700-6.800-.2-11.700 3.300C7 10.800 3 17 4.200 20.800c.8 2.300 3.800 2.400 7.200.9-2.500.6-4.300.2-4.700-1.300-.7-2.900 2.900-8.100 7.900-11.700 3.900-2.800 7.500-4.100 9.200-3.200.7.400.9 1.200.7 2.200.8-2 .9-3.600.1-4.500z" fill="#f0b82c"/></svg>
<svg class="a" style="left:158px;top:547.5px;" width="27" height="27" viewBox="0 0 27 27"><circle cx="13.500" cy="13.500" r="12" fill="#58b04c"/><circle cx="13.500" cy="13.500" r="11.200" fill="none" stroke="#e8f4e4" stroke-width=".9"/><circle cx="13" cy="14.500" r="5.600" fill="#f4faf2"/><circle cx="13" cy="14.500" r="3" fill="#58b04c"/><path d="M13.500 1.500L26 1.500 26 13z" fill="#1c1a16"/><path d="M13 8.500l.8-6.500 2 .3z M16.500 9.500l5-6 1.500 1.300z M18.500 12.500l6.500-3 .8 1.800z" fill="#f08030"/><path d="M14.500 1.700a12 12 0 0 1 10.800 10" fill="none" stroke="#e8f4e4" stroke-width="1"/></svg>
<svg class="a" style="left:205px;top:548px;" width="26" height="26" viewBox="0 0 26 26"><circle cx="13" cy="13" r="11.500" fill="#fff"/><path d="M13 1.500a11.500 11.500 0 0 1 9.960 5.750H13a5.750 5.750 0 0 0-4.980 2.880L3.040 7.250A11.500 11.500 0 0 1 13 1.500z" fill="#e8453c"/><path d="M22.960 7.250a11.500 11.500 0 0 1-9.960 17.250l4.980-8.620a5.750 5.750 0 0 0 0-5.760z" fill="#f8c02c" transform="rotate(0 13 13)"/><path d="M13 24.500A11.500 11.500 0 0 1 3.040 7.250l4.980 8.630a5.750 5.750 0 0 0 4.980 2.870z" fill="#34a454"/><path d="M13 24.500l4.980-8.620a5.750 5.750 0 0 1-4.980 2.870z" fill="#f8c02c"/><circle cx="13" cy="13" r="5.300" fill="#fff"/><circle cx="13" cy="13" r="4.200" fill="#4688f0"/></svg>
<div class="a " style="left:252.9px;top:549px;width:24.2px;height:24px;background:linear-gradient(#ffffff,#f0f0f0);border-radius:4.500px;"></div>
<svg class="a" style="left:252.9px;top:549px;" width="24.2" height="24" viewBox="0 0 24.2 24"><defs><linearGradient id="mb1" x1="0" y1="0.2" x2="1" y2="1"><stop offset="0" stop-color="#1888b8"/><stop offset=".4" stop-color="#1cc4e0"/><stop offset=".75" stop-color="#30c030"/><stop offset="1" stop-color="#b8e020"/></linearGradient><linearGradient id="mb2" x1="0" y1="1" x2="1" y2="0"><stop offset="0" stop-color="#e8102c"/><stop offset=".55" stop-color="#f85020"/><stop offset="1" stop-color="#ffa020"/></linearGradient></defs><path d="M13 3.200C14.500 6 19 8 19 12.500a7 7 0 0 1-14 0C5 7.500 10.500 6.500 13 3.200z" fill="url(#mb1)"/><path d="M13 3.200C10.500 6.500 5 7.500 5.100 12.200c2 .300 4.500-.200 6-1.500 2-1.800 2.400-4.600 1.900-7.500z" fill="url(#mb2)"/></svg>
<svg class="a" style="left:297px;top:548px;" width="29" height="27" viewBox="0 0 29 27"><path d="M14 6.500c-6 .2-10.500 3.600-10.200 8.200.2 3.700 3.600 5.400 6.400 4.600 1.800-.5 2.600.4 3 1.800.5 1.700 2.300 2.600 5 1.800 4.500-1.300 7.300-4.700 7-8.900-.3-4.600-5-7.700-11.200-7.500z" fill="#d8dce4" stroke="#7a8498" stroke-width=".8"/><circle cx="8.500" cy="11.500" r="1.900" fill="#e84040"/><circle cx="13" cy="9.800" r="1.900" fill="#f0c030"/><circle cx="18" cy="10.500" r="1.900" fill="#48b048"/><circle cx="7.800" cy="15.800" r="1.700" fill="#4070d8"/><path d="M24.500 2.500L14.800 18l-1.600 4.500 3.600-3.200L26 3.500z" fill="#d89848" stroke="#8a5a20" stroke-width=".5"/><path d="M14.800 18l-1.600 4.500 3.600-3.200z" fill="#404040"/></svg>
<svg class="a" style="left:345px;top:548px;" width="26" height="26" viewBox="0 0 26 26"><path d="M7.500 1.800h11a5 5 0 0 1 5 5v9.500a5 5 0 0 1-5 5H9.500l-4.500 2.700.400-3.300A5 5 0 0 1 2.200 16.300V6.800a5 5 0 0 1 5.300-5z" fill="#fff" stroke="#1a6ae8" stroke-width="1.500"/><path d="M2.200 7v9.300a5 5 0 0 0 3.200 4.400l-.400 3.300 4.500-2.700h9" fill="none" stroke="#1a62e0" stroke-width="2.400"/><text x="13.700" y="14.800" font-size="8.200" font-weight="bold" text-anchor="middle" fill="#2a6ae0" font-family="Liberation Sans">Zalo</text></svg>
<svg class="a" style="left:3.25px;top:64.0px;" width="20" height="20" viewBox="0 0 20 20"><path d="M16.600 3.800L9.800 10.400" stroke="#e6e6e6" stroke-width="2.400" stroke-linecap="round"/><ellipse cx="6" cy="14.300" rx="3.500" ry="2" transform="rotate(-18 6 14.300)" fill="#e6e6e6"/><path d="M7.500 12.500l2-2 1 1z" fill="#e6e6e6"/></svg>
<svg class="a" style="left:3.25px;top:87.5px;" width="20" height="20" viewBox="0 0 20 20"><g transform="rotate(-40 10 10)"><rect x="4" y="6.2" width="12" height="7.6" rx="1.2" fill="none" stroke="#e6e6e6" stroke-width="1.6"/><rect x="4" y="6.2" width="5" height="7.6" rx="1" fill="#e6e6e6"/></g></svg>
<svg class="a" style="left:3.25px;top:111.5px;" width="20" height="20" viewBox="0 0 20 20"><rect x="5.200" y="5.200" width="9.600" height="9.600" fill="#505050" stroke="#e6e6e6" stroke-width="1.100"/></svg>
<svg class="a" style="left:3.25px;top:135.0px;" width="20" height="20" viewBox="0 0 20 20"><path d="M16.3 4L11 9.8" stroke="#e6e6e6" stroke-width="2.6" stroke-linecap="round"/><path d="M10.3 9.3l1.6 1.5-2.9 1.6z" fill="#e6e6e6"/><circle cx="7.6" cy="13.5" r="1.1" fill="#e6e6e6"/><circle cx="5.2" cy="11.3" r="1" fill="#e6e6e6"/><circle cx="7.2" cy="16.2" r=".9" fill="#e6e6e6"/><circle cx="3.8" cy="9" r=".8" fill="#e6e6e6"/></svg>
<svg class="a" style="left:3.25px;top:163.5px;" width="20" height="20" viewBox="0 0 20 20"><path d="M10 2.2l2.6 3h-1.8v4h4v-1.8l3 2.6-3 2.6v-1.8h-4v4h1.8L10 17.8l-2.6-3h1.8v-4h-4v1.8l-3-2.6 3-2.6v1.8h4v-4H7.400z" fill="#e6e6e6"/></svg>
<svg class="a" style="left:3.25px;top:191.5px;" width="20" height="20" viewBox="0 0 20 20"><rect x="4.8" y="4.8" width="10.4" height="10.4" fill="#ececec" stroke="#c8c8c8" stroke-width=".8"/></svg>
<svg class="a" style="left:3.25px;top:214.5px;" width="20" height="20" viewBox="0 0 20 20"><path d="M4.700 9.600C4.400 6 5.400 2.600 7 2.400c1.500.100 3 3 4.400 6.300" fill="#6c8fb0" stroke="#fff" stroke-width="1.500"/><path d="M1.700 11.300C3 10 5 9.400 8 9.500c3 .100 5 .800 5.900 1.900L8.600 16.200c-.700.600-1.600.600-2.300 0z" fill="#f4f8fc"/><ellipse cx="8" cy="9.700" rx="4.200" ry="1.100" fill="#55728e"/><path d="M11.800 8.600c2.100 1.100 3.500 3.300 4 6 .300 1.500-1.200 2-1.800.900-.500-1.200-.400-2.900-.800-4z" fill="#f4f8fc"/></svg>
<svg class="a" style="left:3.25px;top:238.5px;" width="20" height="20" viewBox="0 0 20 20"><defs><linearGradient id="gg" x1="0" x2="1"><stop offset="0" stop-color="#f0f0f0"/><stop offset="1" stop-color="#3a3a3a"/></linearGradient></defs><rect x="3.500" y="5" width="13" height="10" fill="url(#gg)" stroke="#e0e0e0" stroke-width="1.100"/></svg>
<svg class="a" style="left:3.25px;top:266.5px;" width="20" height="20" viewBox="0 0 20 20"><rect x="5" y="5" width="10" height="10" fill="none" stroke="#e6e6e6" stroke-width="1.500" stroke-dasharray="1.700 1.630"/></svg>
<svg class="a" style="left:3.25px;top:290.5px;" width="20" height="20" viewBox="0 0 20 20"><path d="M3.500 13.300c-1-2.200.600-4 3-4.800 1.800-.600 2.800-2.400 5-3.200 2.500-.800 5 .500 5 2.900 0 2.700-2.400 4.600-5.300 5.700-3.200 1.200-6.700 1.600-7.700-.600z" fill="none" stroke="#e6e6e6" stroke-width="1.400" stroke-dasharray="1.600 1.500"/></svg>
<svg class="a" style="left:3.25px;top:313.5px;" width="20" height="20" viewBox="0 0 20 20"><path d="M4.800 15.600l6.800-7" stroke="#e6e6e6" stroke-width="2.500" stroke-linecap="round"/><path d="M13 6.800l2.200-2.500M13.200 5.200l-.5-2.200M14.600 7.400l2.500.300M12 7.200l-2.300-.600M14.200 8.800l1.200 2" stroke="#e6e6e6" stroke-width="1" stroke-linecap="round"/></svg>
<svg class="a" style="left:3.25px;top:336.5px;" width="20" height="20" viewBox="0 0 20 20"><path d="M4.500 5.500h6M4.500 5.500v10.500h10.500v-5.500" fill="none" stroke="#e6e6e6" stroke-width="1.400" stroke-dasharray="1.600 1.500"/><path d="M16.500 3.800l-6 6.600" stroke="#e6e6e6" stroke-width="2.600" stroke-linecap="round"/><path d="M9.700 9.800l1.700 1.500-3 1.700z" fill="#e6e6e6"/></svg>
<svg class="a" style="left:3.25px;top:359.5px;" width="20" height="20" viewBox="0 0 20 20"><path d="M4.500 5.500h4M4.500 5.500v10.500h10.500v-3" fill="none" stroke="#e6e6e6" stroke-width="1.400" stroke-dasharray="1.600 1.500"/><g transform="rotate(-40 12 9)"><rect x="6.800" y="5.800" width="10.500" height="6.600" rx="1.100" fill="#474747" stroke="#e6e6e6" stroke-width="1.400"/><rect x="6.800" y="5.800" width="4.300" height="6.600" rx="1" fill="#e6e6e6"/></g></svg>
<svg class="a" style="left:3.25px;top:388.0px;" width="20" height="20" viewBox="0 0 20 20"><text x="10" y="16.300" text-anchor="middle" font-family="Liberation Serif,serif" font-weight="bold" font-size="18.500" fill="#e6e6e6">T</text></svg>
<svg class="a" style="left:3.25px;top:411.5px;" width="20" height="20" viewBox="0 0 20 20"><path d="M5.500 5.200l4.200-2 3.500 2.600-.600 2.200M5.500 5.200l-1.200 4.600 3.400 2.400" fill="none" stroke="#e6e6e6" stroke-width="1.300" stroke-linejoin="round"/><path d="M9.800 8.200l7 3.400-3 .800 1.600 3-1.300.700-1.600-3-2.200 2z" fill="#e6e6e6"/></svg>
<svg class="a" style="left:3.25px;top:435.0px;" width="20" height="20" viewBox="0 0 20 20"><path d="M3.500 15.200l4-.200 9.300-9.800c.500-.700-.900-2.300-1.900-1.800L5.500 12z" fill="none" stroke="#e6e6e6" stroke-width="1.300" stroke-linejoin="round"/><path d="M10.500 7.600l5-4.600 1.700 1.800-4.700 5z" fill="#e6e6e6"/></svg>
<svg class="a" style="left:3.25px;top:463.0px;" width="20" height="20" viewBox="0 0 20 20"><path d="M4.200 16l1-3 6.500-6.600 2 2-6.500 6.600z" fill="none" stroke="#e6e6e6" stroke-width="1.400" stroke-linejoin="round"/><path d="M11 5.300l3.800 3.800M12.500 6.500l1.800-2.500c.800-1 2.700.700 1.800 1.700l-2.300 2" stroke="#e6e6e6" stroke-width="1.700" stroke-linecap="round" fill="#e6e6e6"/></svg>
<svg class="a" style="left:3.25px;top:486.5px;" width="20" height="20" viewBox="0 0 20 20"><path d="M6.500 17c-1-1.500-2.800-4-3.600-5.600-.400-1 .800-1.600 1.600-.700l1.500 1.700V5.600c0-1 1.500-1 1.600 0l.300 3.800.200-5.600c.100-1 1.600-1 1.700 0l.100 5.600.700-5c.200-1 1.600-.800 1.600.200l-.300 5.300 1-3.600c.300-.900 1.600-.500 1.500.400-.300 2.600-.600 5-1.200 7.300-.300 1.200-.700 2.200-1.200 3z" fill="#e6e6e6"/></svg>
<div class="a" style="left:10.500px;top:37.500px;width:14px;height:12px;background:radial-gradient(ellipse at center,rgba(150,200,255,.750),rgba(120,170,255,0) 70%);"></div>
<svg class="a" style="left:9px;top:35px;" width="17.5" height="18" viewBox="0 0 17.500 18"><path d="M4.300 12.600c-1.700 0-2.500-1.200-2.400-2.300.100-1.100 1-1.900 2-1.900.100-2 1.500-3.400 3.400-3.400 1.500 0 2.600.800 3.200 2.100 1.400-.200 2.600.700 2.700 2 1.200.200 1.900 1 1.800 2-.100 1-.900 1.500-2 1.500z" fill="#f4faff"/></svg>
<svg class="a" style="left:29px;top:35px;" width="17.5" height="18" viewBox="0 0 17.500 18"><path d="M5.800 7.500H4.300v6.800h9v-6.800h-1.500" fill="none" stroke="#e6e6e6" stroke-width="1.300"/><path d="M8.800 11V4M6.300 6.200l2.500-2.600 2.500 2.600" fill="none" stroke="#e6e6e6" stroke-width="1.400"/></svg>
<svg class="a" style="left:49.5px;top:35px;" width="17.5" height="18" viewBox="0 0 17.500 18"><ellipse cx="8.700" cy="8.300" rx="5.800" ry="4.200" fill="#e6e6e6"/><path d="M6.500 11.500l-.600 2.800 3.200-2.300z" fill="#e6e6e6"/><path d="M5 7.500c1-1.500 5-2 7-.200M5.500 9.500c2 1 5 .800 6.500-.300" stroke="#888" stroke-width=".6" fill="none"/></svg>
<svg class="a" style="left:69.75px;top:35px;" width="17.5" height="18" viewBox="0 0 17.500 18"><path d="M3 4.300h11.500v7.400H9.600l-1.500 1.800-.200-1.800H3z" fill="#e6e6e6"/><path d="M4.800 6.600h8M4.800 9h5.500" stroke="#474747" stroke-width="1.100"/></svg>
<svg class="a" style="left:90px;top:35px;" width="17.5" height="18" viewBox="0 0 17.500 18"><path d="M4.500 3.600h5.800l2.800 2.800v8H4.500z" fill="none" stroke="#e6e6e6" stroke-width="1.200"/><path d="M4.500 7.800h8.500M4.500 10.500h8.500" stroke="#e6e6e6" stroke-width="1.300"/></svg>
<svg class="a" style="left:110px;top:35px;" width="17.5" height="18" viewBox="0 0 17.500 18"><path d="M3.200 3.500h11.300v9H3.200zM3.200 6.500h11.300M3.200 9.500h11.300M6.500 3.500v9" fill="none" stroke="#e6e6e6" stroke-width="1"/><circle cx="6.300" cy="12" r="2.600" fill="#474747" stroke="#e6e6e6" stroke-width="1"/><path d="M6.300 10.600V12h1.200" stroke="#e6e6e6" stroke-width=".8" fill="none"/></svg>
<svg class="a" style="left:130.25px;top:35px;" width="17.5" height="18" viewBox="0 0 17.500 18"><g fill="#e6e6e6"><rect x="3" y="5.700" width="3.200" height="2.600"/><rect x="7" y="5.700" width="3.200" height="2.600"/><rect x="3" y="9.100" width="3.200" height="2.600"/><rect x="7" y="9.100" width="3.200" height="2.600"/><rect x="3" y="12.500" width="3.200" height="2.600"/><rect x="7" y="12.500" width="3.200" height="2.600"/><rect x="11" y="9.100" width="0" height="0"/></g><path d="M11 8.500l3.300-3.800" stroke="#e6e6e6" stroke-width="1.800" stroke-linecap="round"/><circle cx="14.600" cy="4.200" r="1" fill="none" stroke="#e6e6e6" stroke-width=".6"/><path d="M10.500 5.800v9.300" stroke="#e6e6e6" stroke-width=".8"/></svg>
<svg class="a" style="left:169px;top:35px;" width="24" height="18" viewBox="0 0 24 18"><path d="M5 8.300l5.500-4.300v2.600c4.500 0 7.600 2.200 8.500 6.400-2-2.200-4.800-2.800-8.500-2.700v2.500z" fill="#ececec"/></svg>
<svg class="a" style="left:196px;top:35px;" width="23" height="18" viewBox="0 0 23 18"><path d="M18.500 8.300L13 4v2.600c-4.500 0-7.600 2.200-8.500 6.400 2-2.200 4.800-2.800 8.500-2.700v2.500z" fill="#ececec"/></svg>
<svg class="a" style="left:34px;top:178.5px;" width="17" height="17.5" viewBox="0 0 17 17.500"><path d="M8.500 3.300c3.300 0 5.700 2.200 5.700 4.800 0 1.600-1.200 2.300-2.400 2.100-1.300-.200-2.200.300-1.900 1.500.300 1.200-.300 2.300-1.800 2.300-2.900 0-5.200-2.300-5.200-5.300s2.500-5.400 5.600-5.400z" fill="#e6e6e6"/><circle cx="6" cy="6.700" r="1" fill="#474747"/><circle cx="8.800" cy="5.400" r="1" fill="#474747"/><circle cx="11.600" cy="7" r="1" fill="#474747"/><circle cx="5.700" cy="9.800" r="1" fill="#474747"/></svg>
<svg class="a" style="left:54px;top:178.5px;" width="17" height="17.5" viewBox="0 0 17 17.500"><path d="M8.500 3.300c3.300 0 5.700 2.200 5.700 4.800 0 1.600-1.200 2.300-2.400 2.100-1.300-.200-2.200.300-1.900 1.500.300 1.200-.300 2.300-1.800 2.300-2.900 0-5.200-2.300-5.200-5.300s2.500-5.400 5.600-5.400z" fill="#e6e6e6"/><circle cx="6" cy="6.700" r="1" fill="#474747"/><circle cx="8.800" cy="5.400" r="1" fill="#474747"/><circle cx="11.600" cy="7" r="1" fill="#474747"/><circle cx="5.700" cy="9.800" r="1" fill="#474747"/><rect x="9.500" y="10.500" width="6" height="4.500" fill="#474747" stroke="#e6e6e6" stroke-width=".9"/><path d="M10.500 12.800h4" stroke="#e6e6e6" stroke-width=".9"/></svg>
<svg class="a" style="left:31px;top:313.5px;" width="17" height="17.5" viewBox="0 0 17 17.5"><path d="M4.300 3.200h5.400l3 3v8.300H4.300z" fill="none" stroke="#e6e6e6" stroke-width="1.150"/><path d="M9.500 3.300v3.100h3.100" fill="none" stroke="#e6e6e6" stroke-width=".9"/></svg>
<svg class="a" style="left:51.5px;top:313.5px;" width="17" height="17.5" viewBox="0 0 17 17.5"><path d="M3.800 5.600h9.400v1.300H3.800zM6.600 5.600V4.100h3.800v1.500" fill="#e6e6e6" stroke="#e6e6e6" stroke-width=".5"/><path d="M4.700 7.300h7.600v7H4.700z" fill="#e6e6e6"/><path d="M7.200 8.300v5M9.800 8.300v5" stroke="#444" stroke-width="1.200"/></svg>
<svg class="a" style="left:31.4px;top:509px;" width="16.6" height="17.5" viewBox="0 0 16.6 17.5"><path d="M4.300 10.500c-1.500 0-2.300-1-2.200-2 .100-1 .900-1.700 1.900-1.700.100-1.800 1.400-3 3.100-3 1.400 0 2.400.700 2.900 1.900 1.300-.200 2.400.600 2.500 1.800 1.100.200 1.700 1 1.600 1.800-.100.900-.800 1.300-1.800 1.300z" fill="#e6e6e6"/><path d="M8.300 15.500V9.500M6 11.300l2.300-2.400 2.300 2.400" stroke="#474747" stroke-width="2.600" fill="none"/><path d="M8.300 15.300V10M6.300 11.600l2-2.200 2 2.200" stroke="#e6e6e6" stroke-width="1.300" fill="none"/></svg>
<svg class="a" style="left:51.5px;top:509px;" width="16.5" height="17.5" viewBox="0 0 16.5 17.5"><path d="M4.300 3.200h5.400l3 3v8.300H4.300z" fill="none" stroke="#e6e6e6" stroke-width="1.150"/><path d="M9.500 3.300v3.100h3.100" fill="none" stroke="#e6e6e6" stroke-width=".9"/></svg>
<svg class="a" style="left:71.5px;top:509px;" width="21.5" height="17.5" viewBox="0 0 21.5 17.5"><path d="M4.300 3.200h5.400l3 3v8.300H4.300z" fill="none" stroke="#e6e6e6" stroke-width="1.150"/><path d="M9.500 3.300v3.100h3.100" fill="none" stroke="#e6e6e6" stroke-width=".9"/><rect x="6.500" y="8" width="2" height="2" fill="#e6e6e6"/><rect x="8.500" y="10" width="2" height="2" fill="#e6e6e6"/><path d="M14.300 7.800h4.800l-2.400 3.200z" fill="#e6e6e6"/></svg>
<svg class="a" style="left:97px;top:509px;" width="17" height="17.5" viewBox="0 0 17 17.5"><path d="M4.300 3.200h5.400l3 3v8.300H4.300z" fill="none" stroke="#e6e6e6" stroke-width="1.150"/><path d="M9.500 3.300v3.100h3.100" fill="none" stroke="#e6e6e6" stroke-width=".9"/><text x="8.500" y="13.300" font-size="7.500" font-weight="bold" text-anchor="middle" fill="#e6e6e6" font-family="Liberation Sans">S</text></svg>
<svg class="a" style="left:117px;top:509px;" width="17.5" height="17.5" viewBox="0 0 17.5 17.5"><path d="M3 4.800h4.300l1.200 1.400h6.200v7.600H3z" fill="#e6e6e6"/><path d="M3 7.200h11.700" stroke="#474747" stroke-width=".6"/></svg>
<svg class="a" style="left:137.5px;top:509px;" width="17.5" height="17.5" viewBox="0 0 17.5 17.5"><rect x="6.500" y="4" width="7" height="7" fill="none" stroke="#e6e6e6" stroke-width="1"/><rect x="4" y="6.500" width="7" height="7" fill="#474747" stroke="#e6e6e6" stroke-width="1"/></svg>
<svg class="a" style="left:830.5px;top:75px;" width="17.5" height="17.5" viewBox="0 0 17.5 17.5"><circle cx="7.600" cy="7.800" r="3.700" fill="none" stroke="#e6e6e6" stroke-width="1.300"/><path d="M10.400 10.600l2.800 2.800" stroke="#e6e6e6" stroke-width="1.900" stroke-linecap="round"/><path d="M7.600 5.900v3.800" stroke="#e6e6e6" stroke-width="1.200"/></svg>
<svg class="a" style="left:856px;top:75px;" width="17.5" height="17.5" viewBox="0 0 17.5 17.5"><circle cx="7.600" cy="7.800" r="3.700" fill="none" stroke="#e6e6e6" stroke-width="1.300"/><path d="M10.400 10.600l2.800 2.800" stroke="#e6e6e6" stroke-width="1.900" stroke-linecap="round"/><path d="M5.700 7.800h3.800M7.600 5.900v3.800" stroke="#e6e6e6" stroke-width="1.100"/></svg>
<svg class="a" style="left:876px;top:75px;" width="17.5" height="17.5" viewBox="0 0 17.5 17.5"><rect x="3.800" y="4.300" width="10" height="9" fill="none" stroke="#e6e6e6" stroke-width="1.100"/><path d="M5.200 5.700l2.600 2.300M12.400 5.700l-2.600 2.300M5.200 11.900l2.600-2.300M12.400 11.900l-2.600-2.300" stroke="#e6e6e6" stroke-width="1.200"/><path d="M7 8.800h3.600" stroke="#e6e6e6" stroke-width="1.600"/></svg>
<svg class="a" style="left:896px;top:75px;" width="17.5" height="17.5" viewBox="0 0 17.5 17.5"><circle cx="7.600" cy="7.800" r="3.700" fill="none" stroke="#e6e6e6" stroke-width="1.300"/><path d="M10.400 10.600l2.800 2.800" stroke="#e6e6e6" stroke-width="1.900" stroke-linecap="round"/><path d="M5.700 7.800h3.800" stroke="#e6e6e6" stroke-width="1.100"/></svg>
<svg class="a" style="left:922px;top:75px;" width="17.5" height="17.5" viewBox="0 0 17.5 17.5"><circle cx="8.700" cy="8.700" r="5.300" fill="none" stroke="#e6e6e6" stroke-width="1.300"/><path d="M6 10.500l2.200-4.300 3.800 1.800-2 4z" fill="#e6e6e6"/><path d="M3 6.500l1.200 2.500 2-1.800z" fill="#e6e6e6"/></svg>
<svg class="a" style="left:942px;top:75px;" width="18" height="17.5" viewBox="0 0 18 17.5"><path d="M3.500 3.800l3 2.500M14.500 3.800l-3 2.500M3.500 13.700l3-2.500M14.500 13.700l-3-2.500" stroke="#e6e6e6" stroke-width="1.300" stroke-linecap="round"/><rect x="5.300" y="5.700" width="7.400" height="6.200" fill="#e6e6e6"/></svg>
<svg class="a" style="left:962.5px;top:75px;" width="17.5" height="17.5" viewBox="0 0 17.5 17.5"><circle cx="8.700" cy="8.700" r="5.300" fill="none" stroke="#e6e6e6" stroke-width="1.300"/><path d="M11.500 10.500L9.300 6.200 5.500 8l2 4z" fill="#e6e6e6"/><path d="M14.500 6.500l-1.200 2.500-2-1.800z" fill="#e6e6e6"/></svg>
<svg class="a" style="left:988px;top:75px;" width="17" height="17.5" viewBox="0 0 17 17.5"><rect x="3.200" y="8" width="4.500" height="5.500" fill="#e6e6e6"/><rect x="9.300" y="8" width="4.500" height="5.500" fill="none" stroke="#e6e6e6" stroke-width="1"/><path d="M5 6.500c.500-2.500 5.500-3 6.800-.300" fill="none" stroke="#e6e6e6" stroke-width="1"/><path d="M12.800 5l-.700 2.200-1.800-1.200z" fill="#e6e6e6"/></svg>
<svg class="a" style="left:832px;top:333px;" width="17" height="17.5" viewBox="0 0 17 17.5"><path d="M4.300 3.200h5.400l3 3v8.300H4.300z" fill="none" stroke="#e6e6e6" stroke-width="1.150"/><path d="M9.500 3.300v3.100h3.100" fill="none" stroke="#e6e6e6" stroke-width=".9"/></svg>
<svg class="a" style="left:852.5px;top:333px;" width="17" height="17.5" viewBox="0 0 17 17.5"><path d="M4.300 3.200h5.400l3 3v8.300H4.300z" fill="none" stroke="#e6e6e6" stroke-width="1.150"/><path d="M9.500 3.300v3.100h3.100" fill="none" stroke="#e6e6e6" stroke-width=".9"/><text x="8.500" y="13.300" font-size="7.500" font-weight="bold" text-anchor="middle" fill="#e6e6e6" font-family="Liberation Sans">8</text></svg>
<svg class="a" style="left:872.5px;top:333px;" width="17" height="17.5" viewBox="0 0 17 17.5"><path d="M4.300 3.200h5.400l3 3v8.300H4.300z" fill="none" stroke="#e6e6e6" stroke-width="1.150"/><path d="M9.500 3.300v3.100h3.100" fill="none" stroke="#e6e6e6" stroke-width=".9"/><text x="8.500" y="13.300" font-size="7.500" font-weight="bold" text-anchor="middle" fill="#e6e6e6" font-family="Liberation Sans">1</text></svg>
<svg class="a" style="left:893px;top:333px;" width="22.5" height="17.5" viewBox="0 0 22.5 17.5"><path d="M4.300 3.200h5.400l3 3v8.300H4.300z" fill="none" stroke="#e6e6e6" stroke-width="1.150"/><path d="M9.500 3.300v3.100h3.100" fill="none" stroke="#e6e6e6" stroke-width=".9"/><path d="M8.800 10v5M6.300 12.500h5" stroke="#474747" stroke-width="2.600"/><path d="M8.800 10.500v4.500M6.500 12.700h4.600" stroke="#e6e6e6" stroke-width="1.100"/><path d="M15 7.800h4.800l-2.400 3.200z" fill="#e6e6e6"/></svg>
<svg class="a" style="left:918px;top:333px;" width="17.5" height="17.5" viewBox="0 0 17.5 17.5"><path d="M3 4.800h4.300l1.200 1.400h6.200v7.600H3z" fill="#e6e6e6"/><path d="M3 7.200h11.700" stroke="#474747" stroke-width=".6"/></svg>
<svg class="a" style="left:943.5px;top:333px;" width="17.5" height="17.5" viewBox="0 0 17.5 17.5"><rect x="6.500" y="4" width="7" height="7" fill="none" stroke="#e6e6e6" stroke-width="1"/><rect x="4" y="6.500" width="7" height="7" fill="#474747" stroke="#e6e6e6" stroke-width="1"/></svg>
<svg class="a" style="left:964px;top:333px;" width="17.5" height="17.5" viewBox="0 0 17.5 17.5"><rect x="3.500" y="3.800" width="3.600" height="3.600" fill="none" stroke="#e6e6e6" stroke-width="1"/><rect x="3.500" y="10.200" width="3.600" height="3.600" fill="none" stroke="#e6e6e6" stroke-width="1"/><rect x="10" y="7" width="4.200" height="4" fill="#e6e6e6"/><path d="M7.100 5.600h1.500v6.400H7.100M8.600 9H10" fill="none" stroke="#e6e6e6" stroke-width="1"/></svg>
<svg class="a" style="left:989px;top:333px;" width="17" height="17.5" viewBox="0 0 17 17.5"><path d="M3.800 5.600h9.400v1.300H3.800zM6.600 5.600V4.100h3.800v1.500" fill="#e6e6e6" stroke="#e6e6e6" stroke-width=".5"/><path d="M4.700 7.300h7.600v7H4.700z" fill="#e6e6e6"/><path d="M7.200 8.300v5M9.800 8.300v5" stroke="#444" stroke-width="1.200"/></svg>
</div></body></html>
